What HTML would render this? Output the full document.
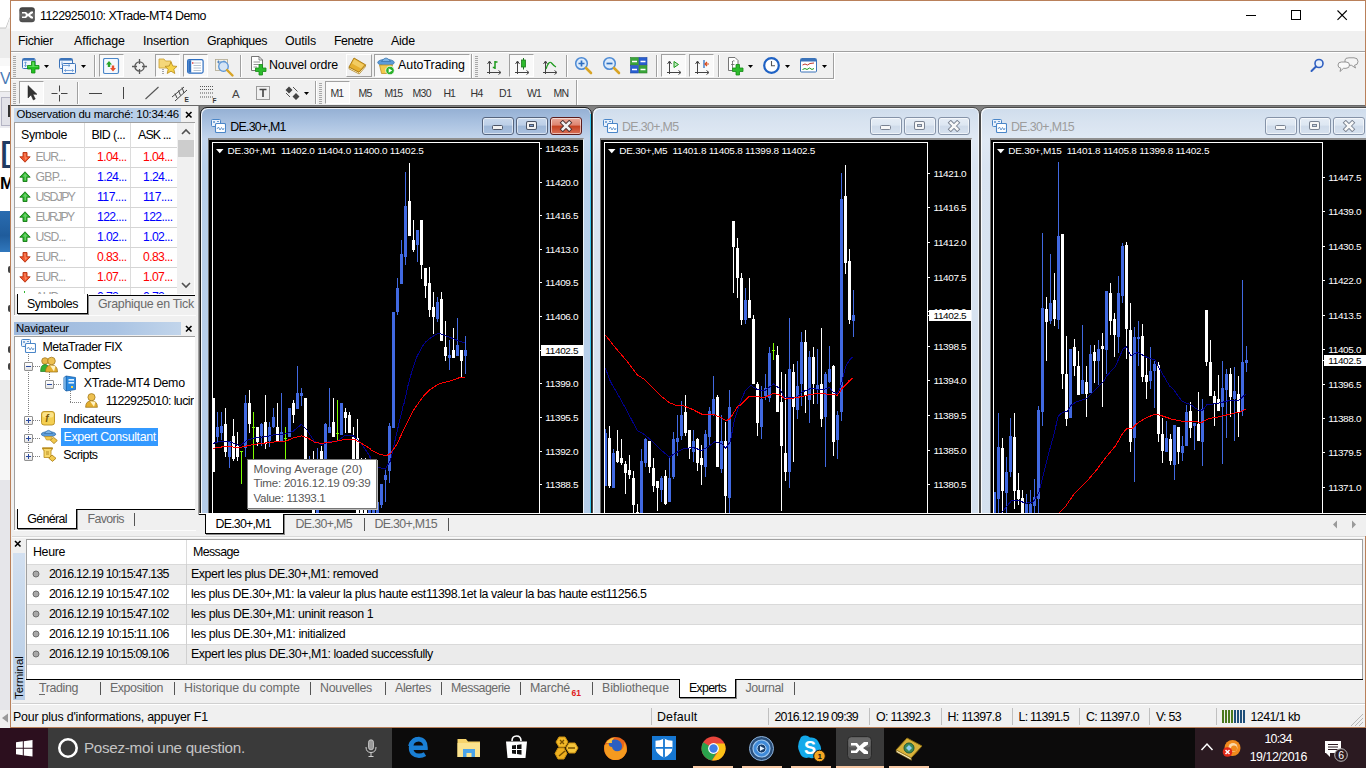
<!DOCTYPE html>
<html><head><meta charset="utf-8"><title>1122925010: XTrade-MT4 Demo</title>
<style>
html,body{margin:0;padding:0}
body{width:1366px;height:768px;position:relative;overflow:hidden;background:#f0f0f0;font-family:"Liberation Sans",sans-serif;font-size:12px}
.t{position:absolute;white-space:pre;display:block}
.r{position:absolute;display:block}
svg text{font-family:"Liberation Sans",sans-serif}
</style></head><body>

<!-- p1_frame -->
<div class="r" style="left:0px;top:0px;width:10px;height:728px;background:#ffffff;"></div>
<div class="r" style="left:0px;top:28px;width:10px;height:30px;background:#ececec;"></div>
<svg class="r" style="left:0px;top:14px;" width="10" height="15"><path d="M10 3.5 L6 14 H0" stroke="#c4c4c4" stroke-width="1" fill="none"/><path d="M10 4 L6.3 14.5 H10 Z" fill="#f4f4f4"/></svg>
<div class="r" style="left:0px;top:58px;width:10px;height:8px;background:#f8f8f8;"></div>
<span class="t" style="left:0.00px;top:71.46px;font-size:16px;line-height:16px;color:#4a7ab5;">V</span>
<div class="r" style="left:0px;top:91px;width:10px;height:1px;background:#d0d0d0;"></div>
<div class="r" style="left:0px;top:92px;width:10px;height:36px;background:#ececf0;"></div>
<div class="r" style="left:1px;top:97px;width:9px;height:29px;background:#e2e2e8;border:1px solid #b4b4c4;border-right:none;box-sizing:border-box;"></div>
<div class="r" style="left:8px;top:105px;width:2px;height:12px;background:#333;"></div>
<span class="t" style="left:-1.00px;top:135.49px;font-size:39px;line-height:40px;color:#1f3b63;">D</span>
<span class="t" style="left:0.00px;top:174.11px;font-size:17px;line-height:20px;color:#000;font-weight:bold;">M</span>
<div class="r" style="left:0px;top:211px;width:10px;height:41px;background:linear-gradient(#2a6cb0,#1f5c9c 60%,#3178bd);"></div>
<div class="r" style="left:8px;top:266px;width:2px;height:7px;background:#444;border-radius:2px 0 0 2px;"></div>
<div class="r" style="left:8px;top:305px;width:2px;height:7px;background:#444;border-radius:2px 0 0 2px;"></div>
<div class="r" style="left:8px;top:346px;width:2px;height:7px;background:#444;border-radius:2px 0 0 2px;"></div>
<div class="r" style="left:8px;top:363px;width:2px;height:7px;background:#444;border-radius:2px 0 0 2px;"></div>
<div class="r" style="left:0px;top:380px;width:10px;height:50px;background:#ececec;"></div>
<div class="r" style="left:0px;top:430px;width:10px;height:50px;background:#f6f6f6;"></div>
<div class="r" style="left:0px;top:480px;width:10px;height:230px;background:#e6e6ea;"></div>
<div class="r" style="left:0px;top:710px;width:10px;height:18px;background:#f0f0f0;"></div>
<svg class="r" style="left:1px;top:713px;" width="8" height="10"><path d="M7 0.5 L1 5 L7 9.5 Z" fill="#9a9a9a"/></svg>
<div class="r" style="left:10px;top:0px;width:1356px;height:728px;background:#f0f0f0;border:1px solid #b9805a;box-sizing:border-box;"></div>
<div class="r" style="left:11px;top:1px;width:1354px;height:30px;background:#ffffff;"></div>
<svg class="r" style="left:19px;top:7px;" width="17" height="16"><defs><linearGradient id="tg" x1="0" y1="0" x2="0" y2="1"><stop offset="0" stop-color="#3c3c3c"/><stop offset="0.5" stop-color="#6a6a6a"/><stop offset="1" stop-color="#4a4a4a"/></linearGradient></defs><rect x="0.3" y="0.3" width="15.6" height="15" rx="3" fill="url(#tg)"/><path d="M3 5 L7 5 L9 7 L12 4.5 L14 4.5 L14 6 L11 8 L14 10 L14 11.5 L12 11.5 L9 9 L7 11 L3 11 L3 9.5 L6 9.5 L7 8 L6 6.5 L3 6.5 Z" fill="#fff"/></svg>
<span class="t" style="left:40.00px;top:8.20px;font-size:12.4px;line-height:16px;color:#000;letter-spacing:-0.540px;">1122925010: XTrade-MT4 Demo</span>
<div class="r" style="left:1246px;top:15px;width:10px;height:1px;background:#000;"></div>
<div class="r" style="left:1291px;top:10px;width:10px;height:10px;background:transparent;border:1px solid #000;box-sizing:border-box;"></div>
<svg class="r" style="left:1336px;top:9px;" width="13" height="13"><path d="M1.5 1.5 L10.8 10.8 M10.8 1.5 L1.5 10.8" stroke="#000" stroke-width="1.1" fill="none"/></svg>
<span class="t" style="left:18.00px;top:32.70px;font-size:12.4px;line-height:16px;color:#000;letter-spacing:-0.315px;">Fichier</span>
<span class="t" style="left:74.00px;top:32.70px;font-size:12.4px;line-height:16px;color:#000;letter-spacing:-0.053px;">Affichage</span>
<span class="t" style="left:143.00px;top:32.70px;font-size:12.4px;line-height:16px;color:#000;letter-spacing:-0.173px;">Insertion</span>
<span class="t" style="left:207.00px;top:32.70px;font-size:12.4px;line-height:16px;color:#000;letter-spacing:-0.411px;">Graphiques</span>
<span class="t" style="left:285.00px;top:32.70px;font-size:12.4px;line-height:16px;color:#000;letter-spacing:-0.116px;">Outils</span>
<span class="t" style="left:334.00px;top:32.70px;font-size:12.4px;line-height:16px;color:#000;letter-spacing:-0.534px;">Fenetre</span>
<span class="t" style="left:391.00px;top:32.70px;font-size:12.4px;line-height:16px;color:#000;letter-spacing:-0.205px;">Aide</span>
<div class="r" style="left:11px;top:51px;width:1354px;height:1px;background:#a0a0a0;"></div>
<div class="r" style="left:11px;top:52px;width:1354px;height:1px;background:#ffffff;"></div>
<div class="r" style="left:11px;top:78px;width:823px;height:1px;background:#a0a0a0;"></div>
<div class="r" style="left:11px;top:79px;width:824px;height:1px;background:#ffffff;"></div>
<div class="r" style="left:833px;top:53px;width:1px;height:26px;background:#a0a0a0;"></div>
<div class="r" style="left:834px;top:53px;width:1px;height:27px;background:#ffffff;"></div>
<div class="r" style="left:576px;top:80px;width:1px;height:25px;background:#a0a0a0;"></div>
<div class="r" style="left:577px;top:80px;width:1px;height:25px;background:#ffffff;"></div>
<div class="r" style="left:11px;top:105px;width:1354px;height:1px;background:#696969;"></div>
<!-- p2_toolbar -->
<div class="r" style="left:13px;top:56px;width:3px;height:1px;background:#a8a8a8;"></div><div class="r" style="left:13px;top:58px;width:3px;height:1px;background:#a8a8a8;"></div><div class="r" style="left:13px;top:60px;width:3px;height:1px;background:#a8a8a8;"></div><div class="r" style="left:13px;top:62px;width:3px;height:1px;background:#a8a8a8;"></div><div class="r" style="left:13px;top:64px;width:3px;height:1px;background:#a8a8a8;"></div><div class="r" style="left:13px;top:66px;width:3px;height:1px;background:#a8a8a8;"></div><div class="r" style="left:13px;top:68px;width:3px;height:1px;background:#a8a8a8;"></div><div class="r" style="left:13px;top:70px;width:3px;height:1px;background:#a8a8a8;"></div><div class="r" style="left:13px;top:72px;width:3px;height:1px;background:#a8a8a8;"></div><div class="r" style="left:13px;top:74px;width:3px;height:1px;background:#a8a8a8;"></div><div class="r" style="left:13px;top:76px;width:3px;height:1px;background:#a8a8a8;"></div>
<svg class="r" style="left:22px;top:57px;" width="18" height="17"><rect x="0.5" y="1.5" width="12.5" height="10" rx="1" fill="#f3f7fd" stroke="#3b73b9"/><rect x="1" y="2" width="11.5" height="1.6" fill="#3b73b9"/><path d="M3.5 5 V9.5 M2.3 6.2 L3.5 4.8 L4.7 6.2 M2.3 8.3 L3.5 9.7 L4.7 8.3" stroke="#5b8fd0" stroke-width="0.8" fill="none"/><path d="M9.5 4.5 H13 V8.5 H17 V12 H13 V16 H9.5 V12 H5.5 V8.5 H9.5 Z" fill="#22c022" stroke="#0f8a0f" stroke-width="0.8"/><path d="M10.3 5.3 H12.2 V9.3 H16.2 V10 H6.3 V9.3 H10.3 Z" fill="#7be87b" opacity="0.7"/></svg>
<svg class="r" style="left:44px;top:65px;" width="5" height="3"><path d="M0 0 L5 0 L2.5 3 Z" fill="#000"/></svg>
<svg class="r" style="left:59px;top:57px;" width="18" height="18"><rect x="0.5" y="1.5" width="13" height="10" rx="1" fill="#f3f7fd" stroke="#3b73b9"/><rect x="1" y="2" width="12" height="1.6" fill="#3b73b9"/><rect x="3.5" y="6.5" width="13" height="10" rx="1" fill="#f3f7fd" stroke="#3b73b9"/><path d="M3 4.5 V8 M3 8.5 H11 M9.5 7.3 L11 8.5 L9.5 9.7" stroke="#5b8fd0" stroke-width="0.8" fill="none"/><path d="M5.5 13.5 H14.5 M7 12.3 L5.5 13.5 L7 14.7 M13 12.3 L14.5 13.5 L13 14.7" stroke="#5b8fd0" stroke-width="0.8" fill="none"/></svg>
<svg class="r" style="left:81px;top:65px;" width="5" height="3"><path d="M0 0 L5 0 L2.5 3 Z" fill="#000"/></svg>
<div class="r" style="left:94px;top:55px;width:1px;height:22px;background:#a0a0a0;"></div><div class="r" style="left:95px;top:55px;width:1px;height:22px;background:#ffffff;"></div>
<div class="r" style="left:99px;top:54px;width:25px;height:23px;background:#f9f9f9;box-sizing:border-box;border:1px solid;border-color:#a0a0a0 #ffffff #ffffff #a0a0a0;"></div>
<svg class="r" style="left:103px;top:58px;" width="17" height="17"><rect x="0.5" y="0.5" width="15" height="15" rx="1.5" fill="#f4f8fd" stroke="#4a86c8" stroke-width="1.2"/><path d="M6 3 L9 6.5 H7.2 V9 H4.8 V6.5 H3 Z" fill="#2aa52a"/><path d="M10 13.5 L7 10 H8.8 V7.5 H11.2 V10 H13 Z" fill="#e8502a"/></svg>
<svg class="r" style="left:132px;top:59px;" width="15" height="15"><circle cx="7.5" cy="7.5" r="4.6" fill="none" stroke="#5a5a5a" stroke-width="1.3"/><path d="M7.5 0 V5 M7.5 10 V15 M0 7.5 H5 M10 7.5 H15" stroke="#5a5a5a" stroke-width="1.3"/></svg>
<div class="r" style="left:155px;top:54px;width:25px;height:23px;background:#f9f9f9;box-sizing:border-box;border:1px solid;border-color:#a0a0a0 #ffffff #ffffff #a0a0a0;"></div>
<svg class="r" style="left:158px;top:56px;" width="20" height="19"><path d="M1 3 H6 L7.5 5 H13 V12 H1 Z" fill="#f5d77a" stroke="#c9a030" stroke-width="0.8"/><path d="M13 6 L14.8 10 L19 10.4 L15.8 13.2 L16.8 17.5 L13 15.2 L9.2 17.5 L10.2 13.2 L7 10.4 L11.2 10 Z" fill="#f7d44a" stroke="#b88a1a" stroke-width="0.8"/><path d="M5 13 V18" stroke="#555" stroke-width="1" stroke-dasharray="1,1"/></svg>
<div class="r" style="left:183px;top:54px;width:25px;height:23px;background:#f9f9f9;box-sizing:border-box;border:1px solid;border-color:#a0a0a0 #ffffff #ffffff #a0a0a0;"></div>
<svg class="r" style="left:187px;top:58.5px;" width="17" height="15"><rect x="0.6" y="0.6" width="15.5" height="13.5" rx="1.5" fill="#fff" stroke="#2f6fc0" stroke-width="1.2"/><rect x="1.2" y="1.2" width="3" height="12.4" fill="#2f6fc0"/><path d="M6.5 4 H14 M6.5 6.5 H14 M6.5 9 H14 M6.5 11.5 H14" stroke="#9ab" stroke-width="0.7"/><rect x="5" y="3.3" width="1.4" height="1.4" fill="#d33"/></svg>
<svg class="r" style="left:215px;top:58px;" width="20" height="20"><rect x="0.5" y="1.5" width="12" height="11" fill="#f3f0e6" stroke="#b0a890" stroke-width="0.8"/><path d="M2 4 H11 M3.5 2.5 V5.5 M9 2.5 V5.5" stroke="#3b73b9" stroke-width="0.8"/><circle cx="8.5" cy="8.5" r="4.8" fill="#cfe2f7" fill-opacity="0.85" stroke="#5b95d6" stroke-width="1.3"/><path d="M12 12 L17.5 17.5" stroke="#d8a426" stroke-width="2.4" stroke-linecap="round"/></svg>
<div class="r" style="left:240px;top:55px;width:1px;height:22px;background:#a0a0a0;"></div><div class="r" style="left:241px;top:55px;width:1px;height:22px;background:#ffffff;"></div>
<svg class="r" style="left:250px;top:56px;" width="18" height="20"><path d="M1.5 0.5 H9 L12.5 4 V14.5 H1.5 Z" fill="#fff" stroke="#666" stroke-width="0.9"/><path d="M9 0.5 V4 H12.5" fill="none" stroke="#666" stroke-width="0.8"/><path d="M3.5 6 H10 M3.5 8.5 H10 M3.5 11 H7" stroke="#888" stroke-width="0.9"/><path d="M9 8.5 H12.5 V12 H16 V15.5 H12.5 V19 H9 V15.5 H5.5 V12 H9 Z" fill="#2dbb2d" stroke="#148a14" stroke-width="0.8"/></svg>
<span class="t" style="left:269.00px;top:56.70px;font-size:12.4px;line-height:16px;color:#000;letter-spacing:-0.166px;">Nouvel ordre</span>
<div class="r" style="left:346px;top:54px;width:26px;height:23px;background:#f0f0f0;box-sizing:border-box;border:1px solid;border-color:#ffffff #a0a0a0 #a0a0a0 #ffffff;"></div>
<svg class="r" style="left:348px;top:57px;" width="20" height="18"><path d="M1 10 L11 15.2 L17.5 7.8 L17.5 9.6 L11.2 17 L1 11.8 Z" fill="#fff3c8" stroke="#a87812" stroke-width="0.7"/><path d="M6 1 L17.5 7.8 L11 15.2 L1 10 Z" fill="#e6b030" stroke="#a87812" stroke-width="0.9"/><path d="M6.2 2.2 L16 8 L13 11.5 L4 6.5 Z" fill="#f6d878" opacity="0.7"/></svg>
<div class="r" style="left:374px;top:54px;width:96px;height:23px;background:#f9f9f9;box-sizing:border-box;border:1px solid;border-color:#a0a0a0 #ffffff #ffffff #a0a0a0;"></div>
<svg class="r" style="left:377px;top:56px;" width="19" height="20"><ellipse cx="9" cy="6.5" rx="8.3" ry="3.2" fill="#5b9bd8" stroke="#356fa8" stroke-width="0.7"/><path d="M4.5 5.5 Q9 -1.5 13.5 5.5 Z" fill="#7db4e6" stroke="#356fa8" stroke-width="0.7"/><path d="M2.5 9 H15.5 L13.5 17.5 H4.5 Z" fill="#f2c94c" stroke="#b88a1a" stroke-width="0.7"/><circle cx="13" cy="14.5" r="4.3" fill="#2bb12b" stroke="#fff" stroke-width="0.8"/><path d="M11.7 12.3 L15.2 14.5 L11.7 16.7 Z" fill="#fff"/></svg>
<span class="t" style="left:398.00px;top:56.70px;font-size:12.4px;line-height:16px;color:#000;letter-spacing:-0.009px;">AutoTrading</span>
<div class="r" style="left:471px;top:54px;width:1px;height:24px;background:#a0a0a0;"></div><div class="r" style="left:472px;top:54px;width:1px;height:24px;background:#ffffff;"></div>
<div class="r" style="left:475px;top:56px;width:3px;height:1px;background:#a8a8a8;"></div><div class="r" style="left:475px;top:58px;width:3px;height:1px;background:#a8a8a8;"></div><div class="r" style="left:475px;top:60px;width:3px;height:1px;background:#a8a8a8;"></div><div class="r" style="left:475px;top:62px;width:3px;height:1px;background:#a8a8a8;"></div><div class="r" style="left:475px;top:64px;width:3px;height:1px;background:#a8a8a8;"></div><div class="r" style="left:475px;top:66px;width:3px;height:1px;background:#a8a8a8;"></div><div class="r" style="left:475px;top:68px;width:3px;height:1px;background:#a8a8a8;"></div><div class="r" style="left:475px;top:70px;width:3px;height:1px;background:#a8a8a8;"></div><div class="r" style="left:475px;top:72px;width:3px;height:1px;background:#a8a8a8;"></div><div class="r" style="left:475px;top:74px;width:3px;height:1px;background:#a8a8a8;"></div><div class="r" style="left:475px;top:76px;width:3px;height:1px;background:#a8a8a8;"></div>
<svg class="r" style="left:486px;top:60px;" width="18" height="17"><path d="M3.5 1.5 V14 M1 12.5 H14.5" stroke="#444" stroke-width="1" fill="none"/><path d="M1.5 4 L3.5 1 L5.5 4 M12.5 10.5 L15 12.5 L12.5 14.5" stroke="#444" stroke-width="1" fill="none"/><path d="M9 1 V9 M9 2 H11.5 M6.8 7.5 H9" stroke="#1d9a1d" stroke-width="1.5" fill="none"/></svg>
<div class="r" style="left:509px;top:54px;width:25px;height:23px;background:#f9f9f9;box-sizing:border-box;border:1px solid;border-color:#a0a0a0 #ffffff #ffffff #a0a0a0;"></div>
<svg class="r" style="left:514px;top:60px;overflow:visible;" width="18" height="17"><path d="M3.5 1.5 V14 M1 12.5 H14.5" stroke="#444" stroke-width="1" fill="none"/><path d="M1.5 4 L3.5 1 L5.5 4 M12.5 10.5 L15 12.5 L12.5 14.5" stroke="#444" stroke-width="1" fill="none"/><path d="M9.5 -2 V9.5" stroke="#1d7a1d" stroke-width="1"/><rect x="7.5" y="0" width="4" height="7" fill="#2dbb2d" stroke="#1d7a1d" stroke-width="0.8"/></svg>
<svg class="r" style="left:542px;top:60px;" width="18" height="17"><path d="M3.5 1.5 V14 M1 12.5 H14.5" stroke="#444" stroke-width="1" fill="none"/><path d="M1.5 4 L3.5 1 L5.5 4 M12.5 10.5 L15 12.5 L12.5 14.5" stroke="#444" stroke-width="1" fill="none"/><path d="M4 9 Q7 0 9.5 3 T14 7" stroke="#1d9a1d" stroke-width="1.2" fill="none"/></svg>
<div class="r" style="left:566px;top:55px;width:1px;height:22px;background:#a0a0a0;"></div><div class="r" style="left:567px;top:55px;width:1px;height:22px;background:#ffffff;"></div>
<svg class="r" style="left:574px;top:56px;" width="20" height="20"><circle cx="7.5" cy="7.5" r="5.8" fill="#dcebfb" stroke="#4d8ad4" stroke-width="1.5"/><path d="M4.5 7.5 H10.5 M7.5 4.5 V10.5" stroke="#2f6fc0" stroke-width="1.7"/><path d="M12 12 L17 17" stroke="#d8a426" stroke-width="2.6" stroke-linecap="round"/></svg>
<svg class="r" style="left:602px;top:56px;" width="20" height="20"><circle cx="7.5" cy="7.5" r="5.8" fill="#dcebfb" stroke="#4d8ad4" stroke-width="1.5"/><path d="M4.5 7.5 H10.5" stroke="#2f6fc0" stroke-width="1.7"/><path d="M12 12 L17 17" stroke="#d8a426" stroke-width="2.6" stroke-linecap="round"/></svg>
<svg class="r" style="left:630px;top:57px;" width="18" height="17"><rect x="0.5" y="0.5" width="8" height="7.5" fill="#3aa53a" stroke="#2b7d2b" stroke-width="0.6"/><rect x="9" y="0.5" width="8" height="7.5" fill="#2a5fd0" stroke="#1d46a0" stroke-width="0.6"/><rect x="0.5" y="8.5" width="8" height="7.5" fill="#2a5fd0" stroke="#1d46a0" stroke-width="0.6"/><rect x="9" y="8.5" width="8" height="7.5" fill="#3aa53a" stroke="#2b7d2b" stroke-width="0.6"/><path d="M2 4.5 H7 M10.5 4.5 H15.5 M2 12.5 H7 M10.5 12.5 H15.5" stroke="#fff" stroke-width="1.6"/></svg>
<div class="r" style="left:656px;top:55px;width:1px;height:22px;background:#a0a0a0;"></div><div class="r" style="left:657px;top:55px;width:1px;height:22px;background:#ffffff;"></div>
<div class="r" style="left:661px;top:54px;width:25px;height:23px;background:#f9f9f9;box-sizing:border-box;border:1px solid;border-color:#a0a0a0 #ffffff #ffffff #a0a0a0;"></div>
<svg class="r" style="left:666px;top:60px;" width="18" height="17"><path d="M3.5 1.5 V14 M1 12.5 H14.5" stroke="#444" stroke-width="1" fill="none"/><path d="M1.5 4 L3.5 1 L5.5 4 M12.5 10.5 L15 12.5 L12.5 14.5" stroke="#444" stroke-width="1" fill="none"/><path d="M8 1.5 L12.5 4.5 L8 7.5 Z" fill="#bfe8bf" stroke="#1d9a1d" stroke-width="1"/></svg>
<div class="r" style="left:689px;top:54px;width:25px;height:23px;background:#f9f9f9;box-sizing:border-box;border:1px solid;border-color:#a0a0a0 #ffffff #ffffff #a0a0a0;"></div>
<svg class="r" style="left:694px;top:60px;" width="18" height="17"><path d="M3.5 1.5 V14 M1 12.5 H14.5" stroke="#444" stroke-width="1" fill="none"/><path d="M1.5 4 L3.5 1 L5.5 4 M12.5 10.5 L15 12.5 L12.5 14.5" stroke="#444" stroke-width="1" fill="none"/><path d="M10 0 V8" stroke="#2f6fc0" stroke-width="1.3"/><path d="M15 4 H11 M13 2 L11 4 L13 6" stroke="#d84a1a" stroke-width="1.2" fill="none"/></svg>
<div class="r" style="left:718px;top:55px;width:1px;height:22px;background:#a0a0a0;"></div><div class="r" style="left:719px;top:55px;width:1px;height:22px;background:#ffffff;"></div>
<svg class="r" style="left:727px;top:57px;" width="18" height="19"><path d="M1.5 0.5 H8 L11 3.5 V13.5 H1.5 Z" fill="#fff" stroke="#666" stroke-width="0.9"/><path d="M5 5 Q6 3 7.5 4 M5.5 4 V11 M4 7.5 H7.5" stroke="#666" stroke-width="0.8" fill="none"/><path d="M9 7.5 H12.5 V11 H16 V14.5 H12.5 V18 H9 V14.5 H5.5 V11 H9 Z" fill="#2dbb2d" stroke="#148a14" stroke-width="0.8"/></svg>
<svg class="r" style="left:748px;top:65px;" width="5" height="3"><path d="M0 0 L5 0 L2.5 3 Z" fill="#000"/></svg>
<svg class="r" style="left:763px;top:57px;" width="18" height="18"><circle cx="8.5" cy="8.5" r="7.3" fill="#fff" stroke="#1f62c4" stroke-width="2.2"/><path d="M8.5 4 V8.8 H12" stroke="#555" stroke-width="1.1" fill="none"/></svg>
<svg class="r" style="left:785px;top:65px;" width="5" height="3"><path d="M0 0 L5 0 L2.5 3 Z" fill="#000"/></svg>
<svg class="r" style="left:800px;top:58px;" width="18" height="15"><rect x="0.5" y="0.5" width="16" height="13.5" rx="1" fill="#fff" stroke="#3b73b9" stroke-width="1"/><rect x="1" y="1" width="15" height="2.5" fill="#3b73b9"/><path d="M2.5 7 L5 6 L7.5 7 L10 5.5 L14 5" stroke="#c0392b" stroke-width="1" fill="none"/><path d="M2.5 11.5 L5 10.5 L7 11.5 L9.5 10 L12 11.5 L14 10.5" stroke="#1d9a1d" stroke-width="1" fill="none"/></svg>
<svg class="r" style="left:822px;top:65px;" width="5" height="3"><path d="M0 0 L5 0 L2.5 3 Z" fill="#000"/></svg>
<svg class="r" style="left:1310px;top:58px;" width="15" height="15"><circle cx="9" cy="5.5" r="4" fill="#e8f0fb" stroke="#2f5fc0" stroke-width="1.6"/><path d="M6 8.5 L1.5 13" stroke="#2f5fc0" stroke-width="2" stroke-linecap="round"/></svg>
<svg class="r" style="left:1337px;top:57px;" width="22" height="18"><path d="M8 3 Q8 0.8 12 0.8 H17 Q21 0.8 21 4.5 Q21 8 17.5 8.3 L18.5 11 L14.5 8.3 H12 Q8 8.3 8 5 Z" fill="#f4f4f4" stroke="#8a8a8a" stroke-width="0.9"/><path d="M1 8 Q1 5 4.5 5 H9 Q12.5 5 12.5 8 Q12.5 11.3 9 11.3 H6.5 L3 14.5 L3.8 11.2 Q1 10.8 1 8 Z" fill="#fafafa" stroke="#8a8a8a" stroke-width="0.9"/></svg>
<div class="r" style="left:13px;top:83px;width:3px;height:1px;background:#a8a8a8;"></div><div class="r" style="left:13px;top:85px;width:3px;height:1px;background:#a8a8a8;"></div><div class="r" style="left:13px;top:87px;width:3px;height:1px;background:#a8a8a8;"></div><div class="r" style="left:13px;top:89px;width:3px;height:1px;background:#a8a8a8;"></div><div class="r" style="left:13px;top:91px;width:3px;height:1px;background:#a8a8a8;"></div><div class="r" style="left:13px;top:93px;width:3px;height:1px;background:#a8a8a8;"></div><div class="r" style="left:13px;top:95px;width:3px;height:1px;background:#a8a8a8;"></div><div class="r" style="left:13px;top:97px;width:3px;height:1px;background:#a8a8a8;"></div><div class="r" style="left:13px;top:99px;width:3px;height:1px;background:#a8a8a8;"></div><div class="r" style="left:13px;top:101px;width:3px;height:1px;background:#a8a8a8;"></div><div class="r" style="left:13px;top:103px;width:3px;height:1px;background:#a8a8a8;"></div>
<div class="r" style="left:19px;top:81px;width:25px;height:23px;background:#f9f9f9;box-sizing:border-box;border:1px solid;border-color:#a0a0a0 #ffffff #ffffff #a0a0a0;"></div>
<svg class="r" style="left:26.5px;top:85px;" width="12" height="16"><path d="M1 0.5 V13 L4 10 L6.3 15 L8.3 14 L6 9.3 H10 Z" fill="#333" stroke="#222" stroke-width="0.5"/></svg>
<svg class="r" style="left:51px;top:85px;" width="18" height="18"><path d="M8.5 0.5 V6.5 M8.5 10 V16.5 M0.5 8.5 H6.5 M10 8.5 H16.5" stroke="#444" stroke-width="1"/></svg>
<div class="r" style="left:77px;top:82px;width:1px;height:22px;background:#a0a0a0;"></div><div class="r" style="left:78px;top:82px;width:1px;height:22px;background:#ffffff;"></div>
<div class="r" style="left:89px;top:93px;width:13px;height:1px;background:#444;"></div>
<div class="r" style="left:123px;top:87px;width:1px;height:12px;background:#444;"></div>
<svg class="r" style="left:144px;top:86px;" width="16" height="14"><path d="M1.5 13 L14.5 1" stroke="#555" stroke-width="1.1"/></svg>
<svg class="r" style="left:171px;top:84px;" width="20" height="18"><path d="M1 13 L13 3 M4 17 L16 6 M4 9.5 L6 14 M7.5 6.5 L9.5 11.5 M11 3.5 L13 9" stroke="#444" stroke-width="1" fill="none"/><text x="13.5" y="17.5" font-size="6.5" font-weight="bold" fill="#333">E</text></svg>
<svg class="r" style="left:199px;top:85px;" width="22" height="18"><path d="M1 1.5 H14 M1 4.5 H14 M1 8 H14 M1 12 H14" stroke="#555" stroke-width="1" stroke-dasharray="1,1"/><text x="13.5" y="17.5" font-size="6.5" font-weight="bold" fill="#333">F</text></svg>
<span class="t" style="left:232.00px;top:86.02px;font-size:11.5px;line-height:16px;color:#444;">A</span>
<svg class="r" style="left:255px;top:84px;" width="17" height="18"><rect x="1.5" y="2.5" width="13" height="13" fill="none" stroke="#444" stroke-width="1" stroke-dasharray="1,1"/><path d="M4.5 5.5 H11.5 M8 5.5 V13" stroke="#444" stroke-width="1.6"/></svg>
<svg class="r" style="left:284px;top:86px;" width="18" height="15"><path d="M5 0.5 L8.5 4 L5 7.5 L1.5 4 Z M12 7 L15.5 10.5 L12 14 L8.5 10.5 Z" fill="#444"/><path d="M2 7 L6 11 M9 1 L13.5 5.5" stroke="#444" stroke-width="0.9"/></svg>
<svg class="r" style="left:304px;top:92px;" width="5" height="3"><path d="M0 0 L5 0 L2.5 3 Z" fill="#000"/></svg>
<div class="r" style="left:315px;top:81px;width:1px;height:23px;background:#a0a0a0;"></div><div class="r" style="left:316px;top:81px;width:1px;height:23px;background:#ffffff;"></div>
<div class="r" style="left:319px;top:83px;width:3px;height:1px;background:#a8a8a8;"></div><div class="r" style="left:319px;top:85px;width:3px;height:1px;background:#a8a8a8;"></div><div class="r" style="left:319px;top:87px;width:3px;height:1px;background:#a8a8a8;"></div><div class="r" style="left:319px;top:89px;width:3px;height:1px;background:#a8a8a8;"></div><div class="r" style="left:319px;top:91px;width:3px;height:1px;background:#a8a8a8;"></div><div class="r" style="left:319px;top:93px;width:3px;height:1px;background:#a8a8a8;"></div><div class="r" style="left:319px;top:95px;width:3px;height:1px;background:#a8a8a8;"></div><div class="r" style="left:319px;top:97px;width:3px;height:1px;background:#a8a8a8;"></div><div class="r" style="left:319px;top:99px;width:3px;height:1px;background:#a8a8a8;"></div><div class="r" style="left:319px;top:101px;width:3px;height:1px;background:#a8a8a8;"></div><div class="r" style="left:319px;top:103px;width:3px;height:1px;background:#a8a8a8;"></div>
<div class="r" style="left:325px;top:81px;width:25px;height:23px;background:#f9f9f9;box-sizing:border-box;border:1px solid;border-color:#a0a0a0 #ffffff #ffffff #a0a0a0;"></div>
<span class="t" style="left:330.50px;top:85.36px;font-size:10.5px;line-height:16px;color:#333;letter-spacing:-1.043px;">M1</span>
<span class="t" style="left:358.60px;top:85.36px;font-size:10.5px;line-height:16px;color:#333;letter-spacing:-0.843px;">M5</span>
<span class="t" style="left:384.50px;top:85.36px;font-size:10.5px;line-height:16px;color:#333;letter-spacing:-0.976px;">M15</span>
<span class="t" style="left:412.60px;top:85.36px;font-size:10.5px;line-height:16px;color:#333;letter-spacing:-0.776px;">M30</span>
<span class="t" style="left:443.50px;top:85.36px;font-size:10.5px;line-height:16px;color:#333;letter-spacing:-0.961px;">H1</span>
<span class="t" style="left:470.50px;top:85.36px;font-size:10.5px;line-height:16px;color:#333;letter-spacing:-0.461px;">H4</span>
<span class="t" style="left:499.00px;top:85.36px;font-size:10.5px;line-height:16px;color:#333;letter-spacing:-0.211px;">D1</span>
<span class="t" style="left:527.00px;top:85.36px;font-size:10.5px;line-height:16px;color:#333;letter-spacing:-0.875px;">W1</span>
<span class="t" style="left:553.50px;top:85.36px;font-size:10.5px;line-height:16px;color:#333;letter-spacing:-0.715px;">MN</span>
<!-- p3_panels -->
<div class="r" style="left:14px;top:108px;width:167px;height:14px;background:linear-gradient(90deg,#c7d8ec,#b4cbe6 60%,#c2d5eb);"></div>
<span class="t" style="left:16.50px;top:105.85px;font-size:11.4px;line-height:16px;color:#000;letter-spacing:-0.216px;">Observation du marché: 10:34:46</span>
<svg class="r" style="left:185px;top:111px;" width="8" height="8"><path d="M1 1 L6.5 6.5 M6.5 1 L1 6.5" stroke="#000" stroke-width="1.6" fill="none"/></svg>
<div class="r" style="left:14px;top:122px;width:181px;height:173px;background:#ffffff;border-left:1px solid #a0a0a0;border-top:1px solid #a0a0a0;box-sizing:border-box;"></div>
<div class="r" style="left:15px;top:147px;width:162px;height:1px;background:#d5d5d5;"></div>
<div class="r" style="left:84px;top:123px;width:1px;height:172px;background:#dcdcdc;"></div>
<div class="r" style="left:130px;top:123px;width:1px;height:172px;background:#dcdcdc;"></div>
<span class="t" style="left:21.00px;top:127.00px;font-size:12.4px;line-height:16px;color:#000;letter-spacing:-0.321px;">Symbole</span>
<span class="t" style="left:91.40px;top:127.00px;font-size:12.4px;line-height:16px;color:#000;letter-spacing:-0.623px;">BID (...</span>
<span class="t" style="left:138.00px;top:127.00px;font-size:12.4px;line-height:16px;color:#000;letter-spacing:-0.856px;">ASK ...</span>
<div class="r" style="left:15px;top:167px;width:162px;height:1px;background:#d5d5d5;"></div>
<svg class="r" style="left:19px;top:151px;" width="12" height="12"><path d="M6 11.2 L11.2 5.8 H8 V1.5 H4 V5.8 H0.8 Z" fill="#f0572d" stroke="#b5300f" stroke-width="0.9"/><path d="M5.2 2.5 H6.6 V6.5 H8.5 L6 9.3 Z" fill="#ffb08f" opacity="0.6"/></svg>
<span class="t" style="left:35.50px;top:149.17px;font-size:12.2px;line-height:16px;color:#9a9a9a;letter-spacing:-1.071px;">EUR...</span>
<span class="t" style="left:97.00px;top:149.17px;font-size:12.2px;line-height:16px;color:#ff0000;letter-spacing:-0.630px;">1.04...</span>
<span class="t" style="left:143.00px;top:149.17px;font-size:12.2px;line-height:16px;color:#ff0000;letter-spacing:-0.630px;">1.04...</span>
<div class="r" style="left:15px;top:187px;width:162px;height:1px;background:#d5d5d5;"></div>
<svg class="r" style="left:19px;top:171px;" width="12" height="12"><path d="M6 0.8 L11.2 6.2 H8 V10.5 H4 V6.2 H0.8 Z" fill="#2fb52f" stroke="#157a15" stroke-width="0.9"/><path d="M6 2.5 L8.8 5.5 H7 V9.3 H5.6 V5.5 H3.8 Z" fill="#8fe08f" opacity="0.6"/></svg>
<span class="t" style="left:35.50px;top:169.17px;font-size:12.2px;line-height:16px;color:#9a9a9a;letter-spacing:-0.643px;">GBP...</span>
<span class="t" style="left:97.00px;top:169.17px;font-size:12.2px;line-height:16px;color:#0000ff;letter-spacing:-0.630px;">1.24...</span>
<span class="t" style="left:143.00px;top:169.17px;font-size:12.2px;line-height:16px;color:#0000ff;letter-spacing:-0.630px;">1.24...</span>
<div class="r" style="left:15px;top:207px;width:162px;height:1px;background:#d5d5d5;"></div>
<svg class="r" style="left:19px;top:191px;" width="12" height="12"><path d="M6 0.8 L11.2 6.2 H8 V10.5 H4 V6.2 H0.8 Z" fill="#2fb52f" stroke="#157a15" stroke-width="0.9"/><path d="M6 2.5 L8.8 5.5 H7 V9.3 H5.6 V5.5 H3.8 Z" fill="#8fe08f" opacity="0.6"/></svg>
<span class="t" style="left:35.50px;top:189.17px;font-size:12.2px;line-height:16px;color:#9a9a9a;letter-spacing:-1.522px;">USDJPY</span>
<span class="t" style="left:97.00px;top:189.17px;font-size:12.2px;line-height:16px;color:#0000ff;letter-spacing:-0.501px;">117....</span>
<span class="t" style="left:143.00px;top:189.17px;font-size:12.2px;line-height:16px;color:#0000ff;letter-spacing:-0.501px;">117....</span>
<div class="r" style="left:15px;top:227px;width:162px;height:1px;background:#d5d5d5;"></div>
<svg class="r" style="left:19px;top:211px;" width="12" height="12"><path d="M6 0.8 L11.2 6.2 H8 V10.5 H4 V6.2 H0.8 Z" fill="#2fb52f" stroke="#157a15" stroke-width="0.9"/><path d="M6 2.5 L8.8 5.5 H7 V9.3 H5.6 V5.5 H3.8 Z" fill="#8fe08f" opacity="0.6"/></svg>
<span class="t" style="left:35.50px;top:209.17px;font-size:12.2px;line-height:16px;color:#9a9a9a;letter-spacing:-1.689px;">EURJPY</span>
<span class="t" style="left:97.00px;top:209.17px;font-size:12.2px;line-height:16px;color:#0000ff;letter-spacing:-0.630px;">122....</span>
<span class="t" style="left:143.00px;top:209.17px;font-size:12.2px;line-height:16px;color:#0000ff;letter-spacing:-0.630px;">122....</span>
<div class="r" style="left:15px;top:247px;width:162px;height:1px;background:#d5d5d5;"></div>
<svg class="r" style="left:19px;top:231px;" width="12" height="12"><path d="M6 0.8 L11.2 6.2 H8 V10.5 H4 V6.2 H0.8 Z" fill="#2fb52f" stroke="#157a15" stroke-width="0.9"/><path d="M6 2.5 L8.8 5.5 H7 V9.3 H5.6 V5.5 H3.8 Z" fill="#8fe08f" opacity="0.6"/></svg>
<span class="t" style="left:35.50px;top:229.17px;font-size:12.2px;line-height:16px;color:#9a9a9a;letter-spacing:-0.988px;">USD...</span>
<span class="t" style="left:97.00px;top:229.17px;font-size:12.2px;line-height:16px;color:#0000ff;letter-spacing:-0.630px;">1.02...</span>
<span class="t" style="left:143.00px;top:229.17px;font-size:12.2px;line-height:16px;color:#0000ff;letter-spacing:-0.630px;">1.02...</span>
<div class="r" style="left:15px;top:267px;width:162px;height:1px;background:#d5d5d5;"></div>
<svg class="r" style="left:19px;top:251px;" width="12" height="12"><path d="M6 11.2 L11.2 5.8 H8 V1.5 H4 V5.8 H0.8 Z" fill="#f0572d" stroke="#b5300f" stroke-width="0.9"/><path d="M5.2 2.5 H6.6 V6.5 H8.5 L6 9.3 Z" fill="#ffb08f" opacity="0.6"/></svg>
<span class="t" style="left:35.50px;top:249.17px;font-size:12.2px;line-height:16px;color:#9a9a9a;letter-spacing:-1.071px;">EUR...</span>
<span class="t" style="left:97.00px;top:249.17px;font-size:12.2px;line-height:16px;color:#ff0000;letter-spacing:-0.630px;">0.83...</span>
<span class="t" style="left:143.00px;top:249.17px;font-size:12.2px;line-height:16px;color:#ff0000;letter-spacing:-0.630px;">0.83...</span>
<div class="r" style="left:15px;top:287px;width:162px;height:1px;background:#d5d5d5;"></div>
<svg class="r" style="left:19px;top:271px;" width="12" height="12"><path d="M6 11.2 L11.2 5.8 H8 V1.5 H4 V5.8 H0.8 Z" fill="#f0572d" stroke="#b5300f" stroke-width="0.9"/><path d="M5.2 2.5 H6.6 V6.5 H8.5 L6 9.3 Z" fill="#ffb08f" opacity="0.6"/></svg>
<span class="t" style="left:35.50px;top:269.17px;font-size:12.2px;line-height:16px;color:#9a9a9a;letter-spacing:-1.071px;">EUR...</span>
<span class="t" style="left:97.00px;top:269.17px;font-size:12.2px;line-height:16px;color:#ff0000;letter-spacing:-0.630px;">1.07...</span>
<span class="t" style="left:143.00px;top:269.17px;font-size:12.2px;line-height:16px;color:#ff0000;letter-spacing:-0.630px;">1.07...</span>
<div class="r" style="left:15px;top:288px;width:162px;height:6px;overflow:hidden"><div class="r" style="left:9px;top:3px;width:1px;height:2px;background:#2fb52f"></div><span class="t" style="left:20.50px;top:1.37px;font-size:12.2px;line-height:16px;color:#9a9a9a;letter-spacing:-0.988px;">AUD...</span><span class="t" style="left:82.00px;top:1.37px;font-size:12.2px;line-height:16px;color:#0000ff;letter-spacing:-0.630px;">0.72...</span><span class="t" style="left:128.00px;top:1.37px;font-size:12.2px;line-height:16px;color:#0000ff;letter-spacing:-0.630px;">0.72...</span></div>
<div class="r" style="left:177px;top:123px;width:17px;height:171px;background:#f0f0f0;"></div>
<div class="r" style="left:178px;top:140px;width:16px;height:17px;background:#cdcdcd;"></div>
<svg class="r" style="left:181px;top:128px;" width="10" height="8"><path d="M1 6 L5 2 L9 6" stroke="#505050" stroke-width="1.6" fill="none"/></svg>
<svg class="r" style="left:181px;top:281px;" width="10" height="8"><path d="M1 2 L5 6 L9 2" stroke="#505050" stroke-width="1.6" fill="none"/></svg>
<div class="r" style="left:88px;top:295px;width:107px;height:1px;background:#000;"></div>
<div class="r" style="left:17px;top:294px;width:71px;height:20px;background:#ffffff;border:1px solid #000;border-top:none;box-sizing:border-box;box-shadow:1px 1px 0 #888;"></div>
<span class="t" style="left:27.00px;top:296.10px;font-size:12.4px;line-height:16px;color:#000;letter-spacing:-0.431px;">Symboles</span>
<div class="r" style="left:88px;top:296px;width:107px;height:20px;overflow:hidden"><span class="t" style="left:10.00px;top:0.10px;font-size:12.4px;line-height:16px;color:#6a6a6a;letter-spacing:-0.273px;">Graphique en Tick</span></div>
<div class="r" style="left:14px;top:295px;width:1px;height:21px;background:#a0a0a0;"></div>
<div class="r" style="left:14px;top:315px;width:182px;height:1px;background:#fcfcfc;"></div>
<div class="r" style="left:14px;top:322px;width:167px;height:13px;background:linear-gradient(90deg,#9db8dc,#a9c3e3 60%,#c2d5eb);"></div>
<span class="t" style="left:16.00px;top:319.55px;font-size:11.4px;line-height:16px;color:#000;letter-spacing:-0.213px;">Navigateur</span>
<svg class="r" style="left:185px;top:325px;" width="8" height="8"><path d="M1 1 L6.5 6.5 M6.5 1 L1 6.5" stroke="#000" stroke-width="1.6" fill="none"/></svg>
<div class="r" style="left:14px;top:336px;width:181px;height:174px;background:#ffffff;border-left:1px solid #a0a0a0;border-top:1px solid #a0a0a0;box-sizing:border-box;"></div>
<div class="r" style="left:28px;top:354px;width:1px;height:98px;background:transparent;background-image:linear-gradient(#808080 50%,transparent 50%);background-size:1px 2px;"></div>
<div class="r" style="left:33px;top:366px;width:7px;height:1px;background:transparent;background-image:linear-gradient(90deg,#808080 50%,transparent 50%);background-size:2px 1px;"></div>
<div class="r" style="left:33px;top:420px;width:7px;height:1px;background:transparent;background-image:linear-gradient(90deg,#808080 50%,transparent 50%);background-size:2px 1px;"></div>
<div class="r" style="left:33px;top:438px;width:7px;height:1px;background:transparent;background-image:linear-gradient(90deg,#808080 50%,transparent 50%);background-size:2px 1px;"></div>
<div class="r" style="left:33px;top:456px;width:7px;height:1px;background:transparent;background-image:linear-gradient(90deg,#808080 50%,transparent 50%);background-size:2px 1px;"></div>
<div class="r" style="left:49px;top:372px;width:1px;height:8px;background:transparent;background-image:linear-gradient(#808080 50%,transparent 50%);background-size:1px 2px;"></div>
<div class="r" style="left:54px;top:384px;width:7px;height:1px;background:transparent;background-image:linear-gradient(90deg,#808080 50%,transparent 50%);background-size:2px 1px;"></div>
<div class="r" style="left:70px;top:391px;width:1px;height:12px;background:transparent;background-image:linear-gradient(#808080 50%,transparent 50%);background-size:1px 2px;"></div>
<div class="r" style="left:70px;top:402px;width:12px;height:1px;background:transparent;background-image:linear-gradient(90deg,#808080 50%,transparent 50%);background-size:2px 1px;"></div>
<div class="r" style="left:24px;top:362px;width:9px;height:9px;background:linear-gradient(#fff,#e4e4e4);border:1px solid #919191;box-sizing:border-box;border-radius:1px;"></div><div class="r" style="left:26px;top:366px;width:5px;height:1px;background:#2a4aa0;"></div>
<div class="r" style="left:45px;top:380px;width:9px;height:9px;background:linear-gradient(#fff,#e4e4e4);border:1px solid #919191;box-sizing:border-box;border-radius:1px;"></div><div class="r" style="left:47px;top:384px;width:5px;height:1px;background:#2a4aa0;"></div>
<div class="r" style="left:24px;top:416px;width:9px;height:9px;background:linear-gradient(#fff,#e4e4e4);border:1px solid #919191;box-sizing:border-box;border-radius:1px;"></div><div class="r" style="left:26px;top:420px;width:5px;height:1px;background:#2a4aa0;"></div><div class="r" style="left:28px;top:418px;width:1px;height:5px;background:#2a4aa0;"></div>
<div class="r" style="left:24px;top:434px;width:9px;height:9px;background:linear-gradient(#fff,#e4e4e4);border:1px solid #919191;box-sizing:border-box;border-radius:1px;"></div><div class="r" style="left:26px;top:438px;width:5px;height:1px;background:#2a4aa0;"></div><div class="r" style="left:28px;top:436px;width:1px;height:5px;background:#2a4aa0;"></div>
<div class="r" style="left:24px;top:452px;width:9px;height:9px;background:linear-gradient(#fff,#e4e4e4);border:1px solid #919191;box-sizing:border-box;border-radius:1px;"></div><div class="r" style="left:26px;top:456px;width:5px;height:1px;background:#2a4aa0;"></div><div class="r" style="left:28px;top:454px;width:1px;height:5px;background:#2a4aa0;"></div>
<svg class="r" style="left:21px;top:339px;" width="15" height="14"><rect x="0.5" y="0.5" width="9" height="7" rx="1" fill="#eaf2fc" stroke="#4a86c8"/><rect x="4.5" y="4.5" width="10" height="9" rx="1" fill="#fff" stroke="#4a86c8" stroke-width="1.1"/><path d="M2 3 H4 M3 2 V4 M6 2.5 H8" stroke="#4a86c8" stroke-width="0.8"/><path d="M6 10 L7.5 8 L9 11 L10.5 8.5 L12 11 L13 9" stroke="#4a86c8" stroke-width="0.8" fill="none"/></svg>
<svg class="r" style="left:40px;top:356px;" width="18" height="17"><circle cx="5" cy="5" r="3.3" fill="#e9b64a" stroke="#9a7012" stroke-width="0.7"/><path d="M0.6 15.5 Q0.6 8.5 5 8.5 Q9.4 8.5 9.4 15.5 Z" fill="#35b035" stroke="#1d7a1d" stroke-width="0.7"/><circle cx="11.5" cy="5" r="3.8" fill="#edc050" stroke="#9a7012" stroke-width="0.7"/><path d="M5.5 16 Q5.5 9 11.5 9 Q17.5 9 17.5 16 Z" fill="#e3ae2e" stroke="#9a7012" stroke-width="0.7"/><path d="M10 9.5 L14 15.5 L15.5 10 Z" fill="#fff3c4"/></svg>
<svg class="r" style="left:63px;top:375px;" width="14" height="17"><path d="M3 1 L12.5 2.5 V14.5 L3 16 Z" fill="#2b8ae0" stroke="#1a5fa8" stroke-width="0.8"/><path d="M0.8 2.5 L3 1 V16 L0.8 14 Z" fill="#8cc4f4" stroke="#1a5fa8" stroke-width="0.6"/><rect x="5.5" y="4" width="5.5" height="1.6" fill="#dff0ff"/><rect x="5.5" y="7" width="5.5" height="1.6" fill="#dff0ff"/><rect x="8" y="11" width="2" height="2" fill="#ffd84a"/></svg>
<svg class="r" style="left:85px;top:393px;" width="13" height="15"><circle cx="6.5" cy="4.2" r="3.6" fill="#edc050" stroke="#9a7012" stroke-width="0.7"/><path d="M0.6 14.3 Q0.6 7.8 6.5 7.8 Q12.4 7.8 12.4 14.3 Z" fill="#e3ae2e" stroke="#9a7012" stroke-width="0.7"/><path d="M5 8.3 L9 13.8 L10.5 8.8 Z" fill="#fff3c4"/></svg>
<svg class="r" style="left:41px;top:411px;" width="14" height="15"><rect x="0.5" y="0.5" width="13" height="13.5" rx="2.5" fill="#f4cf52" stroke="#b98e1c" stroke-width="0.9"/><rect x="1.5" y="1.5" width="11" height="5" rx="2" fill="#fbe79a" opacity="0.8"/><text x="4.2" y="11.2" font-size="10" font-style="italic" font-weight="bold" fill="#7a5a08" font-family="Liberation Serif, serif">f</text></svg>
<svg class="r" style="left:41px;top:429px;" width="17" height="15"><ellipse cx="7.5" cy="5.2" rx="7.2" ry="2.6" fill="#5b9bd8" stroke="#356fa8" stroke-width="0.7"/><path d="M3.5 4.5 Q7.5 -1.8 11.5 4.5 Z" fill="#7db4e6" stroke="#356fa8" stroke-width="0.7"/><path d="M3.5 7.5 H11.5 L9.5 11 H5.5 Z" fill="#f2c94c" stroke="#b88a1a" stroke-width="0.6"/><path d="M12.5 8.3 L16.3 11.5 L13 14.6 L9.4 11.3 Z" fill="#f2c94c" stroke="#a87a12" stroke-width="0.8"/></svg>
<svg class="r" style="left:41px;top:447px;" width="16" height="15"><path d="M2 1 H11 V3 H10 V10.5 H3 V3 H2 Z" fill="#f6d66a" stroke="#b88a1a" stroke-width="0.8"/><path d="M1 1.2 H12" stroke="#b88a1a" stroke-width="1.4"/><path d="M5 5 H8 M5 7 H8" stroke="#a87a12" stroke-width="0.8"/><path d="M11 8 L15 11.3 L11.5 14.4 L7.8 11.2 Z" fill="#f2c94c" stroke="#a87a12" stroke-width="0.8"/></svg>
<span class="t" style="left:42.50px;top:338.70px;font-size:12.4px;line-height:16px;color:#000;letter-spacing:-0.490px;">MetaTrader FIX</span>
<span class="t" style="left:63.30px;top:356.70px;font-size:12.4px;line-height:16px;color:#000;letter-spacing:-0.274px;">Comptes</span>
<span class="t" style="left:83.80px;top:374.70px;font-size:12.4px;line-height:16px;color:#000;letter-spacing:-0.311px;">XTrade-MT4 Demo</span>
<div class="r" style="left:100px;top:392px;width:94px;height:18px;overflow:hidden"><span class="t" style="left:5.80px;top:0.70px;font-size:12.4px;line-height:16px;color:#000;letter-spacing:-0.581px;">1122925010: lucir</span></div>
<span class="t" style="left:63.30px;top:410.70px;font-size:12.4px;line-height:16px;color:#000;letter-spacing:-0.269px;">Indicateurs</span>
<div class="r" style="left:61px;top:428px;width:97px;height:18px;background:#3399ff;"></div>
<span class="t" style="left:63.50px;top:428.70px;font-size:12.4px;line-height:16px;color:#fff;letter-spacing:-0.363px;">Expert Consultant</span>
<span class="t" style="left:63.30px;top:446.70px;font-size:12.4px;line-height:16px;color:#000;letter-spacing:-0.528px;">Scripts</span>
<div class="r" style="left:77px;top:509px;width:118px;height:1px;background:#000;"></div>
<div class="r" style="left:17px;top:509px;width:60px;height:20px;background:#ffffff;border:1px solid #000;border-top:none;box-sizing:border-box;box-shadow:1px 1px 0 #888;"></div>
<span class="t" style="left:27.30px;top:510.70px;font-size:12.4px;line-height:16px;color:#000;letter-spacing:-0.659px;">Général</span>
<span class="t" style="left:87.40px;top:510.70px;font-size:12.4px;line-height:16px;color:#6a6a6a;letter-spacing:-0.579px;">Favoris</span>
<div class="r" style="left:134px;top:513px;width:1px;height:13px;background:#555;"></div>
<div class="r" style="left:14px;top:510px;width:1px;height:20px;background:#a0a0a0;"></div>
<div class="r" style="left:14px;top:530px;width:182px;height:1px;background:#fcfcfc;"></div>
<!-- p4_mdi -->
<div class="r" style="left:199px;top:106px;width:1167px;height:409px;background:#808080;"></div>
<div class="r" style="left:196px;top:106px;width:3px;height:409px;background:#f0f0f0;"></div>
<div class="r" style="left:198px;top:106px;width:1px;height:409px;background:#a0a0a0;"></div>
<div class="r" style="left:199px;top:106px;width:1px;height:409px;background:#696969;"></div>
<div class="r" style="left:200px;top:106px;width:1166px;height:408px;overflow:hidden">
<div class="r" style="left:-200px;top:-106px;width:1366px;height:768px">
<div class="r" style="left:200px;top:107px;width:392px;height:420px;background:linear-gradient(#94afd3 0px,#a9c1e0 14px,#c3d5ec 31px,#b9d0ea 60px,#b5cce8 100%);border:1px solid #1c1c1c;border-radius:7px 7px 0 0;box-sizing:border-box;box-shadow:inset 1px 1px 0 rgba(255,255,255,.85),inset -1px 0 0 rgba(255,255,255,.6);"></div>
<div class="r" style="left:590px;top:114px;width:1px;height:400px;background:#35c4ee;"></div>
<svg class="r" style="left:211px;top:119px;" width="15" height="14"><rect x="0.5" y="0.5" width="9" height="7" rx="1" fill="#eaf2fc" stroke="#4a86c8"/><rect x="4.5" y="4.5" width="10" height="9" rx="1" fill="#fff" stroke="#4a86c8" stroke-width="1.1"/><path d="M2 3 H4 M3 2 V4 M6 2.5 H8" stroke="#4a86c8" stroke-width="0.8"/><path d="M6 10 L7.5 8 L9 11 L10.5 8.5 L12 11 L13 9" stroke="#4a86c8" stroke-width="0.8" fill="none"/></svg>
<span class="t" style="left:230.30px;top:118.70px;font-size:12.4px;line-height:16px;color:#000;letter-spacing:-0.764px;">DE.30+,M1</span>
<div class="r" style="left:482px;top:117px;width:32px;height:18px;background:linear-gradient(#c9d9ed 0%,#bccfe7 45%,#9fb8d8 50%,#a9c0de 100%);border:1px solid #56657e;border-radius:3px;box-sizing:border-box;box-shadow:inset 0 0 0 1px rgba(255,255,255,.55);"></div><div class="r" style="left:492px;top:125px;width:11px;height:5px;background:#f1f1f1;border:1px solid #4c5566;border-radius:1.5px;box-sizing:border-box;"></div><div class="r" style="left:516px;top:117px;width:32px;height:18px;background:linear-gradient(#c9d9ed 0%,#bccfe7 45%,#9fb8d8 50%,#a9c0de 100%);border:1px solid #56657e;border-radius:3px;box-sizing:border-box;box-shadow:inset 0 0 0 1px rgba(255,255,255,.55);"></div><div class="r" style="left:526px;top:121px;width:11px;height:9px;background:#4c5566;border-radius:2px;"></div><div class="r" style="left:527px;top:122px;width:9px;height:7px;background:#f1f1f1;border-radius:1px;"></div><div class="r" style="left:529px;top:124px;width:5px;height:3px;background:#4c5566;"></div><div class="r" style="left:530px;top:125px;width:3px;height:1px;background:#7f9fd0;"></div><div class="r" style="left:550px;top:117px;width:32px;height:18px;background:linear-gradient(#e9aa9b 0%,#de8470 45%,#c4401f 50%,#d87058 100%);border:1px solid #5c1c1c;border-radius:3px;box-sizing:border-box;box-shadow:inset 0 0 0 1px rgba(255,255,255,.55);"></div><svg class="r" style="left:559px;top:120px;" width="14" height="12"><path d="M3.8 2.8 L10.2 9.2 M10.2 2.8 L3.8 9.2" stroke="#4a3030" stroke-width="4.4" stroke-linecap="square"/><path d="M3.8 2.8 L10.2 9.2 M10.2 2.8 L3.8 9.2" stroke="#f1f1f1" stroke-width="2.6" stroke-linecap="square"/></svg>
<div class="r" style="left:208px;top:138px;width:376px;height:380px;background:#000;border:1px solid;border-color:#909090 #eef3f9 #6b6b6b #6b6b6b;border-top-width:2px;border-bottom:none;box-sizing:border-box;"></div>
<div class="r" style="left:212px;top:142px;width:328px;height:1px;background:#fff;"></div>
<div class="r" style="left:212px;top:142px;width:1px;height:372px;background:#fff;"></div>
<div class="r" style="left:539px;top:142px;width:1px;height:372px;background:#fff;"></div>
<svg class="r" style="left:216px;top:149px;" width="8" height="5"><path d="M0 0 H7.5 L3.75 4.2 Z" fill="#fff"/></svg>
<span class="t" style="left:227.60px;top:142.73px;font-size:10px;line-height:16px;color:#fff;letter-spacing:-0.234px;transform:scaleY(0.875);transform-origin:0 11.46px;">DE.30+,M1  11402.0 11404.0 11400.0 11402.5</span>
<div class="r" style="left:540px;top:148px;width:2px;height:1px;background:#fff;"></div>
<span class="t" style="left:545.30px;top:140.73px;font-size:10px;line-height:16px;color:#fff;letter-spacing:-0.358px;transform:scaleY(0.875);transform-origin:0 11.46px;">11423.5</span>
<div class="r" style="left:540px;top:182px;width:2px;height:1px;background:#fff;"></div>
<span class="t" style="left:545.30px;top:174.73px;font-size:10px;line-height:16px;color:#fff;letter-spacing:-0.358px;transform:scaleY(0.875);transform-origin:0 11.46px;">11420.0</span>
<div class="r" style="left:540px;top:215px;width:2px;height:1px;background:#fff;"></div>
<span class="t" style="left:545.30px;top:207.73px;font-size:10px;line-height:16px;color:#fff;letter-spacing:-0.358px;transform:scaleY(0.875);transform-origin:0 11.46px;">11416.5</span>
<div class="r" style="left:540px;top:249px;width:2px;height:1px;background:#fff;"></div>
<span class="t" style="left:545.30px;top:241.73px;font-size:10px;line-height:16px;color:#fff;letter-spacing:-0.358px;transform:scaleY(0.875);transform-origin:0 11.46px;">11413.0</span>
<div class="r" style="left:540px;top:282px;width:2px;height:1px;background:#fff;"></div>
<span class="t" style="left:545.30px;top:274.74px;font-size:10px;line-height:16px;color:#fff;letter-spacing:-0.358px;transform:scaleY(0.875);transform-origin:0 11.46px;">11409.5</span>
<div class="r" style="left:540px;top:316px;width:2px;height:1px;background:#fff;"></div>
<span class="t" style="left:545.30px;top:308.74px;font-size:10px;line-height:16px;color:#fff;letter-spacing:-0.358px;transform:scaleY(0.875);transform-origin:0 11.46px;">11406.0</span>
<div class="r" style="left:540px;top:383px;width:2px;height:1px;background:#fff;"></div>
<span class="t" style="left:545.30px;top:375.74px;font-size:10px;line-height:16px;color:#fff;letter-spacing:-0.358px;transform:scaleY(0.875);transform-origin:0 11.46px;">11399.0</span>
<div class="r" style="left:540px;top:417px;width:2px;height:1px;background:#fff;"></div>
<span class="t" style="left:545.30px;top:409.74px;font-size:10px;line-height:16px;color:#fff;letter-spacing:-0.358px;transform:scaleY(0.875);transform-origin:0 11.46px;">11395.5</span>
<div class="r" style="left:540px;top:451px;width:2px;height:1px;background:#fff;"></div>
<span class="t" style="left:545.30px;top:443.74px;font-size:10px;line-height:16px;color:#fff;letter-spacing:-0.358px;transform:scaleY(0.875);transform-origin:0 11.46px;">11392.0</span>
<div class="r" style="left:540px;top:484px;width:2px;height:1px;background:#fff;"></div>
<span class="t" style="left:545.30px;top:476.74px;font-size:10px;line-height:16px;color:#fff;letter-spacing:-0.358px;transform:scaleY(0.875);transform-origin:0 11.46px;">11388.5</span>
<div class="r" style="left:540px;top:350px;width:2px;height:1px;background:#fff;"></div>
<div class="r" style="left:541px;top:345px;width:42px;height:11px;background:#fff;"></div>
<span class="t" style="left:545.30px;top:342.74px;font-size:10px;line-height:16px;color:#000;letter-spacing:-0.358px;transform:scaleY(0.875);transform-origin:0 11.46px;">11402.5</span>
<div class="r" style="left:592px;top:107px;width:388px;height:420px;background:linear-gradient(#cfdcec 0px,#d8e3f0 14px,#e0e9f4 31px,#d9e4f1 60px,#d4e0ee 100%);border:1px solid #4a4a4a;border-radius:7px 7px 0 0;box-sizing:border-box;box-shadow:inset 1px 1px 0 rgba(255,255,255,.85),inset -1px 0 0 rgba(255,255,255,.6);"></div>
<svg class="r" style="left:603px;top:119px;" width="15" height="14"><rect x="0.5" y="0.5" width="9" height="7" rx="1" fill="#eaf2fc" stroke="#4a86c8"/><rect x="4.5" y="4.5" width="10" height="9" rx="1" fill="#fff" stroke="#4a86c8" stroke-width="1.1"/><path d="M2 3 H4 M3 2 V4 M6 2.5 H8" stroke="#4a86c8" stroke-width="0.8"/><path d="M6 10 L7.5 8 L9 11 L10.5 8.5 L12 11 L13 9" stroke="#4a86c8" stroke-width="0.8" fill="none"/></svg>
<span class="t" style="left:622.00px;top:118.70px;font-size:12.4px;line-height:16px;color:#9c9c9c;letter-spacing:-0.653px;">DE.30+,M5</span>
<div class="r" style="left:870px;top:117px;width:32px;height:18px;background:linear-gradient(#e6edf6 0%,#dde7f2 45%,#cfdbea 50%,#d6e1ee 100%);border:1px solid #8593a8;border-radius:3px;box-sizing:border-box;box-shadow:inset 0 0 0 1px rgba(255,255,255,.6);"></div><div class="r" style="left:880px;top:125px;width:11px;height:5px;background:#f8f8f8;border:1px solid #7a8392;border-radius:1.5px;box-sizing:border-box;"></div><div class="r" style="left:904px;top:117px;width:32px;height:18px;background:linear-gradient(#e6edf6 0%,#dde7f2 45%,#cfdbea 50%,#d6e1ee 100%);border:1px solid #8593a8;border-radius:3px;box-sizing:border-box;box-shadow:inset 0 0 0 1px rgba(255,255,255,.6);"></div><div class="r" style="left:914px;top:121px;width:11px;height:9px;background:#7a8392;border-radius:2px;"></div><div class="r" style="left:915px;top:122px;width:9px;height:7px;background:#f8f8f8;border-radius:1px;"></div><div class="r" style="left:917px;top:124px;width:5px;height:3px;background:#7a8392;"></div><div class="r" style="left:918px;top:125px;width:3px;height:1px;background:#c4d2e4;"></div><div class="r" style="left:938px;top:117px;width:32px;height:18px;background:linear-gradient(#e6edf6 0%,#dde7f2 45%,#cfdbea 50%,#d6e1ee 100%);border:1px solid #8593a8;border-radius:3px;box-sizing:border-box;box-shadow:inset 0 0 0 1px rgba(255,255,255,.6);"></div><svg class="r" style="left:947px;top:120px;" width="14" height="12"><path d="M3.8 2.8 L10.2 9.2 M10.2 2.8 L3.8 9.2" stroke="#7a8392" stroke-width="4.4" stroke-linecap="square"/><path d="M3.8 2.8 L10.2 9.2 M10.2 2.8 L3.8 9.2" stroke="#f8f8f8" stroke-width="2.6" stroke-linecap="square"/></svg>
<div class="r" style="left:600px;top:138px;width:372px;height:380px;background:#000;border:1px solid;border-color:#909090 #eef3f9 #6b6b6b #6b6b6b;border-top-width:2px;border-bottom:none;box-sizing:border-box;"></div>
<div class="r" style="left:604px;top:142px;width:324px;height:1px;background:#fff;"></div>
<div class="r" style="left:604px;top:142px;width:1px;height:372px;background:#fff;"></div>
<div class="r" style="left:927px;top:142px;width:1px;height:372px;background:#fff;"></div>
<svg class="r" style="left:608px;top:149px;" width="8" height="5"><path d="M0 0 H7.5 L3.75 4.2 Z" fill="#fff"/></svg>
<span class="t" style="left:619.20px;top:142.73px;font-size:10px;line-height:16px;color:#fff;letter-spacing:-0.234px;transform:scaleY(0.875);transform-origin:0 11.46px;">DE.30+,M5  11401.8 11405.8 11399.8 11402.5</span>
<div class="r" style="left:928px;top:173px;width:2px;height:1px;background:#fff;"></div>
<span class="t" style="left:933.50px;top:165.73px;font-size:10px;line-height:16px;color:#fff;letter-spacing:-0.387px;transform:scaleY(0.875);transform-origin:0 11.46px;">11421.0</span>
<div class="r" style="left:928px;top:207px;width:2px;height:1px;background:#fff;"></div>
<span class="t" style="left:933.50px;top:199.73px;font-size:10px;line-height:16px;color:#fff;letter-spacing:-0.387px;transform:scaleY(0.875);transform-origin:0 11.46px;">11416.5</span>
<div class="r" style="left:928px;top:242px;width:2px;height:1px;background:#fff;"></div>
<span class="t" style="left:933.50px;top:234.73px;font-size:10px;line-height:16px;color:#fff;letter-spacing:-0.387px;transform:scaleY(0.875);transform-origin:0 11.46px;">11412.0</span>
<div class="r" style="left:928px;top:277px;width:2px;height:1px;background:#fff;"></div>
<span class="t" style="left:933.50px;top:269.74px;font-size:10px;line-height:16px;color:#fff;letter-spacing:-0.387px;transform:scaleY(0.875);transform-origin:0 11.46px;">11407.5</span>
<div class="r" style="left:928px;top:311px;width:2px;height:1px;background:#fff;"></div>
<span class="t" style="left:933.50px;top:303.74px;font-size:10px;line-height:16px;color:#fff;letter-spacing:-0.387px;transform:scaleY(0.875);transform-origin:0 11.46px;">11403.0</span>
<div class="r" style="left:928px;top:346px;width:2px;height:1px;background:#fff;"></div>
<span class="t" style="left:933.50px;top:338.74px;font-size:10px;line-height:16px;color:#fff;letter-spacing:-0.387px;transform:scaleY(0.875);transform-origin:0 11.46px;">11398.5</span>
<div class="r" style="left:928px;top:380px;width:2px;height:1px;background:#fff;"></div>
<span class="t" style="left:933.50px;top:372.74px;font-size:10px;line-height:16px;color:#fff;letter-spacing:-0.387px;transform:scaleY(0.875);transform-origin:0 11.46px;">11394.0</span>
<div class="r" style="left:928px;top:415px;width:2px;height:1px;background:#fff;"></div>
<span class="t" style="left:933.50px;top:407.74px;font-size:10px;line-height:16px;color:#fff;letter-spacing:-0.387px;transform:scaleY(0.875);transform-origin:0 11.46px;">11389.5</span>
<div class="r" style="left:928px;top:450px;width:2px;height:1px;background:#fff;"></div>
<span class="t" style="left:933.50px;top:442.74px;font-size:10px;line-height:16px;color:#fff;letter-spacing:-0.387px;transform:scaleY(0.875);transform-origin:0 11.46px;">11385.0</span>
<div class="r" style="left:928px;top:484px;width:2px;height:1px;background:#fff;"></div>
<span class="t" style="left:933.50px;top:476.74px;font-size:10px;line-height:16px;color:#fff;letter-spacing:-0.387px;transform:scaleY(0.875);transform-origin:0 11.46px;">11380.5</span>
<div class="r" style="left:928px;top:315px;width:2px;height:1px;background:#fff;"></div>
<div class="r" style="left:929px;top:310px;width:42px;height:11px;background:#fff;"></div>
<span class="t" style="left:933.50px;top:307.74px;font-size:10px;line-height:16px;color:#000;letter-spacing:-0.387px;transform:scaleY(0.875);transform-origin:0 11.46px;">11402.5</span>
<div class="r" style="left:980px;top:107px;width:393px;height:420px;background:linear-gradient(#cfdcec 0px,#d8e3f0 14px,#e0e9f4 31px,#d9e4f1 60px,#d4e0ee 100%);border:1px solid #4a4a4a;border-radius:7px 7px 0 0;box-sizing:border-box;box-shadow:inset 1px 1px 0 rgba(255,255,255,.85),inset -1px 0 0 rgba(255,255,255,.6);"></div>
<svg class="r" style="left:992px;top:119px;" width="15" height="14"><rect x="0.5" y="0.5" width="9" height="7" rx="1" fill="#eaf2fc" stroke="#4a86c8"/><rect x="4.5" y="4.5" width="10" height="9" rx="1" fill="#fff" stroke="#4a86c8" stroke-width="1.1"/><path d="M2 3 H4 M3 2 V4 M6 2.5 H8" stroke="#4a86c8" stroke-width="0.8"/><path d="M6 10 L7.5 8 L9 11 L10.5 8.5 L12 11 L13 9" stroke="#4a86c8" stroke-width="0.8" fill="none"/></svg>
<span class="t" style="left:1011.00px;top:118.70px;font-size:12.4px;line-height:16px;color:#9c9c9c;letter-spacing:-0.627px;">DE.30+,M15</span>
<div class="r" style="left:1265px;top:117px;width:32px;height:18px;background:linear-gradient(#e6edf6 0%,#dde7f2 45%,#cfdbea 50%,#d6e1ee 100%);border:1px solid #8593a8;border-radius:3px;box-sizing:border-box;box-shadow:inset 0 0 0 1px rgba(255,255,255,.6);"></div><div class="r" style="left:1275px;top:125px;width:11px;height:5px;background:#f8f8f8;border:1px solid #7a8392;border-radius:1.5px;box-sizing:border-box;"></div><div class="r" style="left:1299px;top:117px;width:32px;height:18px;background:linear-gradient(#e6edf6 0%,#dde7f2 45%,#cfdbea 50%,#d6e1ee 100%);border:1px solid #8593a8;border-radius:3px;box-sizing:border-box;box-shadow:inset 0 0 0 1px rgba(255,255,255,.6);"></div><div class="r" style="left:1309px;top:121px;width:11px;height:9px;background:#7a8392;border-radius:2px;"></div><div class="r" style="left:1310px;top:122px;width:9px;height:7px;background:#f8f8f8;border-radius:1px;"></div><div class="r" style="left:1312px;top:124px;width:5px;height:3px;background:#7a8392;"></div><div class="r" style="left:1313px;top:125px;width:3px;height:1px;background:#c4d2e4;"></div><div class="r" style="left:1333px;top:117px;width:32px;height:18px;background:linear-gradient(#e6edf6 0%,#dde7f2 45%,#cfdbea 50%,#d6e1ee 100%);border:1px solid #8593a8;border-radius:3px;box-sizing:border-box;box-shadow:inset 0 0 0 1px rgba(255,255,255,.6);"></div><svg class="r" style="left:1342px;top:120px;" width="14" height="12"><path d="M3.8 2.8 L10.2 9.2 M10.2 2.8 L3.8 9.2" stroke="#7a8392" stroke-width="4.4" stroke-linecap="square"/><path d="M3.8 2.8 L10.2 9.2 M10.2 2.8 L3.8 9.2" stroke="#f8f8f8" stroke-width="2.6" stroke-linecap="square"/></svg>
<div class="r" style="left:990px;top:138px;width:381px;height:380px;background:#000;border:1px solid;border-color:#909090 #eef3f9 #6b6b6b #6b6b6b;border-top-width:2px;border-bottom:none;box-sizing:border-box;"></div>
<div class="r" style="left:993px;top:142px;width:330px;height:1px;background:#fff;"></div>
<div class="r" style="left:993px;top:142px;width:1px;height:372px;background:#fff;"></div>
<div class="r" style="left:1322px;top:142px;width:1px;height:372px;background:#fff;"></div>
<svg class="r" style="left:997px;top:149px;" width="8" height="5"><path d="M0 0 H7.5 L3.75 4.2 Z" fill="#fff"/></svg>
<span class="t" style="left:1008.20px;top:142.73px;font-size:10px;line-height:16px;color:#fff;letter-spacing:-0.241px;transform:scaleY(0.875);transform-origin:0 11.46px;">DE.30+,M15  11401.8 11405.8 11399.8 11402.5</span>
<div class="r" style="left:1323px;top:177px;width:2px;height:1px;background:#fff;"></div>
<span class="t" style="left:1328.20px;top:169.73px;font-size:10px;line-height:16px;color:#fff;letter-spacing:-0.344px;transform:scaleY(0.875);transform-origin:0 11.46px;">11447.5</span>
<div class="r" style="left:1323px;top:211px;width:2px;height:1px;background:#fff;"></div>
<span class="t" style="left:1328.20px;top:203.73px;font-size:10px;line-height:16px;color:#fff;letter-spacing:-0.344px;transform:scaleY(0.875);transform-origin:0 11.46px;">11439.0</span>
<div class="r" style="left:1323px;top:246px;width:2px;height:1px;background:#fff;"></div>
<span class="t" style="left:1328.20px;top:238.73px;font-size:10px;line-height:16px;color:#fff;letter-spacing:-0.344px;transform:scaleY(0.875);transform-origin:0 11.46px;">11430.5</span>
<div class="r" style="left:1323px;top:280px;width:2px;height:1px;background:#fff;"></div>
<span class="t" style="left:1328.20px;top:272.74px;font-size:10px;line-height:16px;color:#fff;letter-spacing:-0.344px;transform:scaleY(0.875);transform-origin:0 11.46px;">11422.0</span>
<div class="r" style="left:1323px;top:315px;width:2px;height:1px;background:#fff;"></div>
<span class="t" style="left:1328.20px;top:307.74px;font-size:10px;line-height:16px;color:#fff;letter-spacing:-0.344px;transform:scaleY(0.875);transform-origin:0 11.46px;">11413.5</span>
<div class="r" style="left:1323px;top:349px;width:2px;height:1px;background:#fff;"></div>
<span class="t" style="left:1328.20px;top:341.74px;font-size:10px;line-height:16px;color:#fff;letter-spacing:-0.344px;transform:scaleY(0.875);transform-origin:0 11.46px;">11405.0</span>
<div class="r" style="left:1323px;top:384px;width:2px;height:1px;background:#fff;"></div>
<span class="t" style="left:1328.20px;top:376.74px;font-size:10px;line-height:16px;color:#fff;letter-spacing:-0.344px;transform:scaleY(0.875);transform-origin:0 11.46px;">11396.5</span>
<div class="r" style="left:1323px;top:418px;width:2px;height:1px;background:#fff;"></div>
<span class="t" style="left:1328.20px;top:410.74px;font-size:10px;line-height:16px;color:#fff;letter-spacing:-0.344px;transform:scaleY(0.875);transform-origin:0 11.46px;">11388.0</span>
<div class="r" style="left:1323px;top:452px;width:2px;height:1px;background:#fff;"></div>
<span class="t" style="left:1328.20px;top:444.74px;font-size:10px;line-height:16px;color:#fff;letter-spacing:-0.344px;transform:scaleY(0.875);transform-origin:0 11.46px;">11379.5</span>
<div class="r" style="left:1323px;top:487px;width:2px;height:1px;background:#fff;"></div>
<span class="t" style="left:1328.20px;top:479.74px;font-size:10px;line-height:16px;color:#fff;letter-spacing:-0.344px;transform:scaleY(0.875);transform-origin:0 11.46px;">11371.0</span>
<div class="r" style="left:1323px;top:360px;width:2px;height:1px;background:#fff;"></div>
<div class="r" style="left:1324px;top:355px;width:46px;height:11px;background:#fff;"></div>
<span class="t" style="left:1328.20px;top:352.74px;font-size:10px;line-height:16px;color:#000;letter-spacing:-0.344px;transform:scaleY(0.875);transform-origin:0 11.46px;">11402.5</span>
<svg class="r" style="left:213px;top:143px" width="326" height="370" viewBox="213 143 326 370" shape-rendering="crispEdges"><rect x="212" y="398" width="3" height="74" fill="#ffffff"/><rect x="217" y="412" width="1" height="30" fill="#4169e1"/><rect x="216" y="427" width="3" height="10" fill="#4169e1"/><rect x="221" y="412" width="1" height="28" fill="#4169e1"/><rect x="220" y="426" width="3" height="7" fill="#4169e1"/><rect x="225" y="408" width="1" height="49" fill="#ffffff"/><rect x="224" y="424" width="3" height="28" fill="#ffffff"/><rect x="229" y="441" width="1" height="27" fill="#4169e1"/><rect x="228" y="441" width="3" height="16" fill="#4169e1"/><rect x="233" y="419" width="1" height="42" fill="#ffffff"/><rect x="232" y="436" width="3" height="23" fill="#ffffff"/><rect x="237" y="432" width="1" height="29" fill="#ffffff"/><rect x="236" y="446" width="3" height="11" fill="#ffffff"/><rect x="245" y="395" width="1" height="62" fill="#4169e1"/><rect x="244" y="403" width="3" height="45" fill="#4169e1"/><rect x="249" y="390" width="1" height="43" fill="#ffffff"/><rect x="248" y="403" width="3" height="21" fill="#ffffff"/><rect x="257" y="427" width="1" height="19" fill="#ffffff"/><rect x="256" y="427" width="3" height="15" fill="#ffffff"/><rect x="261" y="423" width="1" height="23" fill="#4169e1"/><rect x="260" y="424" width="3" height="12" fill="#4169e1"/><rect x="265" y="395" width="1" height="54" fill="#ffffff"/><rect x="264" y="422" width="3" height="22" fill="#ffffff"/><rect x="269" y="422" width="1" height="25" fill="#4169e1"/><rect x="268" y="427" width="3" height="14" fill="#4169e1"/><rect x="273" y="408" width="1" height="20" fill="#4169e1"/><rect x="272" y="417" width="3" height="10" fill="#4169e1"/><rect x="277" y="403" width="1" height="38" fill="#ffffff"/><rect x="276" y="427" width="3" height="14" fill="#ffffff"/><rect x="281" y="393" width="1" height="48" fill="#4169e1"/><rect x="280" y="432" width="3" height="9" fill="#4169e1"/><rect x="288" y="408" width="3" height="29" fill="#4169e1"/><rect x="293" y="400" width="1" height="23" fill="#ffffff"/><rect x="292" y="403" width="3" height="12" fill="#ffffff"/><rect x="297" y="366" width="1" height="43" fill="#4169e1"/><rect x="296" y="393" width="3" height="16" fill="#4169e1"/><rect x="301" y="388" width="1" height="18" fill="#4169e1"/><rect x="300" y="393" width="3" height="3" fill="#4169e1"/><rect x="304" y="398" width="3" height="106" fill="#ffffff"/><rect x="309" y="456" width="1" height="48" fill="#4169e1"/><rect x="308" y="461" width="3" height="43" fill="#4169e1"/><rect x="313" y="451" width="1" height="62" fill="#ffffff"/><rect x="312" y="461" width="3" height="52" fill="#ffffff"/><rect x="317" y="448" width="1" height="65" fill="#4169e1"/><rect x="316" y="461" width="3" height="52" fill="#4169e1"/><rect x="321" y="446" width="1" height="58" fill="#ffffff"/><rect x="320" y="451" width="3" height="53" fill="#ffffff"/><rect x="325" y="423" width="1" height="81" fill="#4169e1"/><rect x="324" y="424" width="3" height="80" fill="#4169e1"/><rect x="329" y="388" width="1" height="45" fill="#4169e1"/><rect x="328" y="427" width="3" height="6" fill="#4169e1"/><rect x="333" y="398" width="1" height="39" fill="#ffffff"/><rect x="332" y="422" width="3" height="15" fill="#ffffff"/><rect x="340" y="403" width="3" height="32" fill="#4169e1"/><rect x="345" y="408" width="1" height="25" fill="#ffffff"/><rect x="344" y="412" width="3" height="6" fill="#ffffff"/><rect x="349" y="412" width="1" height="21" fill="#ffffff"/><rect x="348" y="415" width="3" height="18" fill="#ffffff"/><rect x="353" y="427" width="1" height="77" fill="#ffffff"/><rect x="352" y="437" width="3" height="67" fill="#ffffff"/><rect x="357" y="419" width="1" height="94" fill="#ffffff"/><rect x="356" y="438" width="3" height="75" fill="#ffffff"/><rect x="361" y="458" width="1" height="55" fill="#ffffff"/><rect x="360" y="460" width="3" height="53" fill="#ffffff"/><rect x="365" y="458" width="1" height="55" fill="#ffffff"/><rect x="364" y="461" width="3" height="52" fill="#ffffff"/><rect x="369" y="469" width="1" height="44" fill="#4169e1"/><rect x="368" y="472" width="3" height="41" fill="#4169e1"/><rect x="373" y="486" width="1" height="27" fill="#4169e1"/><rect x="372" y="490" width="3" height="23" fill="#4169e1"/><rect x="377" y="499" width="1" height="14" fill="#4169e1"/><rect x="376" y="502" width="3" height="11" fill="#4169e1"/><rect x="381" y="484" width="1" height="24" fill="#4169e1"/><rect x="380" y="484" width="3" height="21" fill="#4169e1"/><rect x="385" y="469" width="1" height="33" fill="#4169e1"/><rect x="384" y="475" width="3" height="5" fill="#4169e1"/><rect x="389" y="423" width="1" height="60" fill="#4169e1"/><rect x="388" y="426" width="3" height="45" fill="#4169e1"/><rect x="392" y="312" width="3" height="116" fill="#4169e1"/><rect x="397" y="278" width="1" height="37" fill="#4169e1"/><rect x="396" y="288" width="3" height="24" fill="#4169e1"/><rect x="401" y="240" width="1" height="44" fill="#4169e1"/><rect x="400" y="254" width="3" height="30" fill="#4169e1"/><rect x="405" y="172" width="1" height="93" fill="#4169e1"/><rect x="404" y="206" width="3" height="51" fill="#4169e1"/><rect x="409" y="163" width="1" height="73" fill="#ffffff"/><rect x="408" y="201" width="3" height="35" fill="#ffffff"/><rect x="413" y="220" width="1" height="32" fill="#ffffff"/><rect x="412" y="240" width="3" height="10" fill="#ffffff"/><rect x="417" y="230" width="1" height="32" fill="#4169e1"/><rect x="416" y="230" width="3" height="15" fill="#4169e1"/><rect x="421" y="220" width="1" height="59" fill="#ffffff"/><rect x="420" y="220" width="3" height="45" fill="#ffffff"/><rect x="425" y="268" width="1" height="30" fill="#ffffff"/><rect x="424" y="268" width="3" height="18" fill="#ffffff"/><rect x="429" y="267" width="1" height="50" fill="#ffffff"/><rect x="428" y="283" width="3" height="27" fill="#ffffff"/><rect x="433" y="292" width="1" height="42" fill="#ffffff"/><rect x="432" y="307" width="3" height="10" fill="#ffffff"/><rect x="437" y="297" width="1" height="25" fill="#4169e1"/><rect x="436" y="302" width="3" height="17" fill="#4169e1"/><rect x="441" y="292" width="1" height="49" fill="#ffffff"/><rect x="440" y="299" width="3" height="42" fill="#ffffff"/><rect x="445" y="321" width="1" height="40" fill="#ffffff"/><rect x="444" y="347" width="3" height="9" fill="#ffffff"/><rect x="449" y="340" width="1" height="30" fill="#4169e1"/><rect x="448" y="355" width="3" height="3" fill="#4169e1"/><rect x="453" y="328" width="1" height="30" fill="#ffffff"/><rect x="452" y="350" width="3" height="8" fill="#ffffff"/><rect x="457" y="318" width="1" height="38" fill="#4169e1"/><rect x="456" y="345" width="3" height="11" fill="#4169e1"/><rect x="461" y="350" width="1" height="27" fill="#ffffff"/><rect x="460" y="350" width="3" height="11" fill="#ffffff"/><rect x="465" y="336" width="1" height="38" fill="#4169e1"/><rect x="464" y="350" width="3" height="6" fill="#4169e1"/><rect x="241" y="451" width="1" height="33" fill="#7fff00"/><rect x="240" y="451" width="3" height="1" fill="#7fff00"/><rect x="253" y="412" width="1" height="92" fill="#7fff00"/><rect x="252" y="427" width="3" height="1" fill="#7fff00"/><rect x="285" y="427" width="1" height="77" fill="#7fff00"/><rect x="284" y="438" width="3" height="1" fill="#7fff00"/><rect x="337" y="400" width="1" height="41" fill="#7fff00"/><rect x="336" y="433" width="3" height="1" fill="#7fff00"/><polyline points="213.3,443.4 220.4,441.1 229.3,441.6 239.9,445.9 247.0,440.2 255.8,437.6 266.4,436.7 275.3,434.5 282.4,434.9 293.0,431.4 301.5,424.3 307.2,430.5 314.3,441.1 321.3,444.6 328.4,442.0 337.3,441.1 344.4,435.8 353.2,435.8 360.3,442.0 370.9,457.9 370.1,457.9 377.2,466.8 385.2,469.1 390.5,460.6 396.7,433.1 403.8,403.0 403.6,406.0 408.1,385.1 412.5,369.2 416.9,356.8 421.4,347.9 425.8,341.7 432.0,336.9 438.2,333.4 440.8,333.8 449.7,337.3 458.5,340.8 464.7,343.0" fill="none" stroke="#00008b" stroke-width="1" shape-rendering="crispEdges"/><polyline points="213.3,448.2 225.7,446.4 239.9,447.6 252.3,444.6 266.4,442.9 278.8,441.4 285.9,441.1 293.0,438.1 301.5,435.8 307.2,437.6 314.3,442.0 321.3,443.4 332.0,442.0 342.6,439.9 355.0,439.7 362.1,443.8 370.9,449.1 371.0,449.9 379.0,454.0 386.0,455.8 390.5,453.5 396.7,444.6 403.8,429.6 410.8,415.4 416.1,405.7 416.4,406.0 423.1,396.6 430.2,389.5 438.2,384.2 446.1,381.9 453.2,380.1 458.5,378.0 464.7,377.1" fill="none" stroke="#ff0000" stroke-width="1" shape-rendering="crispEdges"/></svg>
<svg class="r" style="left:605px;top:143px" width="322" height="370" viewBox="605 143 322 370" shape-rendering="crispEdges"><rect x="605" y="429" width="1" height="57" fill="#4169e1"/><rect x="604" y="433" width="3" height="53" fill="#4169e1"/><rect x="609" y="426" width="1" height="62" fill="#ffffff"/><rect x="608" y="438" width="3" height="48" fill="#ffffff"/><rect x="613" y="449" width="1" height="39" fill="#4169e1"/><rect x="612" y="453" width="3" height="35" fill="#4169e1"/><rect x="617" y="430" width="1" height="33" fill="#ffffff"/><rect x="616" y="451" width="3" height="11" fill="#ffffff"/><rect x="621" y="439" width="1" height="26" fill="#ffffff"/><rect x="620" y="458" width="3" height="5" fill="#ffffff"/><rect x="625" y="461" width="1" height="33" fill="#ffffff"/><rect x="624" y="464" width="3" height="9" fill="#ffffff"/><rect x="629" y="455" width="1" height="24" fill="#ffffff"/><rect x="628" y="470" width="3" height="5" fill="#ffffff"/><rect x="633" y="471" width="1" height="42" fill="#ffffff"/><rect x="632" y="478" width="3" height="27" fill="#ffffff"/><rect x="637" y="504" width="1" height="9" fill="#ffffff"/><rect x="636" y="512" width="3" height="1" fill="#ffffff"/><rect x="641" y="449" width="1" height="64" fill="#4169e1"/><rect x="640" y="461" width="3" height="52" fill="#4169e1"/><rect x="645" y="438" width="1" height="29" fill="#4169e1"/><rect x="644" y="439" width="3" height="24" fill="#4169e1"/><rect x="649" y="441" width="1" height="32" fill="#ffffff"/><rect x="648" y="441" width="3" height="26" fill="#ffffff"/><rect x="653" y="458" width="1" height="34" fill="#ffffff"/><rect x="652" y="468" width="3" height="18" fill="#ffffff"/><rect x="657" y="481" width="1" height="30" fill="#ffffff"/><rect x="656" y="481" width="3" height="7" fill="#ffffff"/><rect x="661" y="476" width="1" height="26" fill="#4169e1"/><rect x="660" y="478" width="3" height="12" fill="#4169e1"/><rect x="665" y="470" width="1" height="35" fill="#ffffff"/><rect x="664" y="476" width="3" height="28" fill="#ffffff"/><rect x="669" y="456" width="1" height="46" fill="#4169e1"/><rect x="668" y="478" width="3" height="24" fill="#4169e1"/><rect x="673" y="432" width="1" height="47" fill="#4169e1"/><rect x="672" y="439" width="3" height="38" fill="#4169e1"/><rect x="677" y="415" width="1" height="41" fill="#4169e1"/><rect x="676" y="438" width="3" height="4" fill="#4169e1"/><rect x="681" y="401" width="1" height="39" fill="#4169e1"/><rect x="680" y="415" width="3" height="21" fill="#4169e1"/><rect x="685" y="395" width="1" height="41" fill="#ffffff"/><rect x="684" y="412" width="3" height="21" fill="#ffffff"/><rect x="689" y="430" width="1" height="29" fill="#ffffff"/><rect x="688" y="430" width="3" height="19" fill="#ffffff"/><rect x="693" y="430" width="1" height="32" fill="#4169e1"/><rect x="692" y="441" width="3" height="11" fill="#4169e1"/><rect x="697" y="438" width="1" height="33" fill="#ffffff"/><rect x="696" y="439" width="3" height="24" fill="#ffffff"/><rect x="701" y="445" width="1" height="40" fill="#ffffff"/><rect x="700" y="458" width="3" height="7" fill="#ffffff"/><rect x="705" y="430" width="1" height="47" fill="#4169e1"/><rect x="704" y="434" width="3" height="33" fill="#4169e1"/><rect x="709" y="407" width="1" height="38" fill="#4169e1"/><rect x="708" y="411" width="3" height="26" fill="#4169e1"/><rect x="713" y="376" width="1" height="40" fill="#4169e1"/><rect x="712" y="399" width="3" height="15" fill="#4169e1"/><rect x="717" y="395" width="1" height="72" fill="#ffffff"/><rect x="716" y="397" width="3" height="70" fill="#ffffff"/><rect x="721" y="415" width="1" height="58" fill="#4169e1"/><rect x="720" y="441" width="3" height="28" fill="#4169e1"/><rect x="725" y="422" width="1" height="91" fill="#ffffff"/><rect x="724" y="441" width="3" height="55" fill="#ffffff"/><rect x="729" y="390" width="1" height="123" fill="#4169e1"/><rect x="728" y="407" width="3" height="91" fill="#4169e1"/><rect x="733" y="221" width="1" height="72" fill="#ffffff"/><rect x="732" y="221" width="3" height="26" fill="#ffffff"/><rect x="737" y="238" width="1" height="60" fill="#ffffff"/><rect x="736" y="248" width="3" height="30" fill="#ffffff"/><rect x="741" y="273" width="1" height="52" fill="#ffffff"/><rect x="740" y="278" width="3" height="42" fill="#ffffff"/><rect x="745" y="288" width="1" height="36" fill="#4169e1"/><rect x="744" y="300" width="3" height="20" fill="#4169e1"/><rect x="749" y="278" width="1" height="40" fill="#ffffff"/><rect x="748" y="300" width="3" height="18" fill="#ffffff"/><rect x="753" y="315" width="1" height="69" fill="#ffffff"/><rect x="752" y="319" width="3" height="65" fill="#ffffff"/><rect x="757" y="382" width="1" height="54" fill="#ffffff"/><rect x="756" y="384" width="3" height="39" fill="#ffffff"/><rect x="761" y="386" width="1" height="53" fill="#4169e1"/><rect x="760" y="399" width="3" height="28" fill="#4169e1"/><rect x="765" y="374" width="1" height="26" fill="#4169e1"/><rect x="764" y="388" width="3" height="8" fill="#4169e1"/><rect x="769" y="347" width="1" height="55" fill="#4169e1"/><rect x="768" y="353" width="3" height="45" fill="#4169e1"/><rect x="777" y="346" width="1" height="66" fill="#ffffff"/><rect x="776" y="355" width="3" height="57" fill="#ffffff"/><rect x="781" y="372" width="1" height="139" fill="#ffffff"/><rect x="780" y="402" width="3" height="44" fill="#ffffff"/><rect x="785" y="374" width="1" height="107" fill="#ffffff"/><rect x="784" y="453" width="3" height="19" fill="#ffffff"/><rect x="789" y="318" width="1" height="170" fill="#4169e1"/><rect x="788" y="369" width="3" height="103" fill="#4169e1"/><rect x="793" y="364" width="1" height="98" fill="#ffffff"/><rect x="792" y="372" width="3" height="35" fill="#ffffff"/><rect x="797" y="361" width="1" height="58" fill="#4169e1"/><rect x="796" y="386" width="3" height="24" fill="#4169e1"/><rect x="801" y="332" width="1" height="74" fill="#4169e1"/><rect x="800" y="342" width="3" height="42" fill="#4169e1"/><rect x="805" y="330" width="1" height="83" fill="#ffffff"/><rect x="804" y="342" width="3" height="53" fill="#ffffff"/><rect x="809" y="351" width="1" height="72" fill="#4169e1"/><rect x="808" y="357" width="3" height="43" fill="#4169e1"/><rect x="813" y="347" width="1" height="57" fill="#ffffff"/><rect x="812" y="357" width="3" height="27" fill="#ffffff"/><rect x="817" y="349" width="1" height="55" fill="#4169e1"/><rect x="816" y="385" width="3" height="4" fill="#4169e1"/><rect x="821" y="328" width="1" height="99" fill="#ffffff"/><rect x="820" y="384" width="3" height="35" fill="#ffffff"/><rect x="825" y="372" width="1" height="95" fill="#4169e1"/><rect x="824" y="374" width="3" height="43" fill="#4169e1"/><rect x="829" y="346" width="1" height="37" fill="#4169e1"/><rect x="828" y="369" width="3" height="13" fill="#4169e1"/><rect x="833" y="365" width="1" height="91" fill="#ffffff"/><rect x="832" y="366" width="3" height="76" fill="#ffffff"/><rect x="837" y="411" width="1" height="48" fill="#4169e1"/><rect x="836" y="415" width="3" height="25" fill="#4169e1"/><rect x="841" y="173" width="1" height="248" fill="#4169e1"/><rect x="840" y="199" width="3" height="213" fill="#4169e1"/><rect x="845" y="165" width="1" height="109" fill="#ffffff"/><rect x="844" y="196" width="3" height="67" fill="#ffffff"/><rect x="849" y="249" width="1" height="75" fill="#ffffff"/><rect x="848" y="261" width="3" height="59" fill="#ffffff"/><rect x="853" y="290" width="1" height="47" fill="#4169e1"/><rect x="852" y="315" width="3" height="6" fill="#4169e1"/><rect x="773" y="343" width="1" height="17" fill="#7fff00"/><rect x="772" y="350" width="3" height="1" fill="#7fff00"/><polyline points="605.3,367.8 608.9,377.5 612.4,386.0 609.7,380.0 617.7,394.2 626.6,410.1 637.2,430.5 644.3,434.5 653.1,442.0 662.0,450.8 669.4,457.0 677.9,451.7 685.0,448.2 693.9,447.8 701.8,450.5 708.0,446.9 715.1,441.6 722.2,444.1 725.7,448.2 730.2,442.0 734.6,419.0 740.0,403.0 745.3,390.6 750.6,385.3 757.7,389.7 764.8,390.6 773.6,383.9 779.8,388.9 784.3,397.7 796.7,397.7 802.0,392.0 810.8,388.5 823.2,389.7 829.4,387.4 833.0,392.0 837.4,393.8 841.8,383.5 843.6,374.0 846.3,365.1 849.8,359.8 853.0,356.8" fill="none" stroke="#00008b" stroke-width="1" shape-rendering="crispEdges"/><polyline points="605.3,335.0 615.9,348.3 626.6,360.7 637.2,374.8 644.3,379.3 645.2,380.0 653.1,388.0 662.0,396.8 669.4,402.7 676.1,405.3 683.2,405.7 692.1,409.2 701.8,414.2 713.3,414.5 720.4,417.2 726.1,420.7 730.2,418.6 738.1,405.7 740.0,405.7 748.9,396.5 764.8,397.2 773.6,393.3 779.8,395.1 785.2,399.1 796.7,397.7 807.3,395.1 817.9,393.3 837.4,395.1 841.8,388.9 849.8,380.9 848.0,381.4 853.0,377.9" fill="none" stroke="#ff0000" stroke-width="1" shape-rendering="crispEdges"/></svg>
<svg class="r" style="left:994px;top:143px" width="328" height="370" viewBox="994 143 328 370" shape-rendering="crispEdges"><rect x="993" y="492" width="3" height="21" fill="#4169e1"/><rect x="998" y="413" width="1" height="100" fill="#4169e1"/><rect x="997" y="447" width="3" height="52" fill="#4169e1"/><rect x="1002" y="438" width="1" height="75" fill="#ffffff"/><rect x="1001" y="448" width="3" height="43" fill="#ffffff"/><rect x="1006" y="457" width="1" height="56" fill="#4169e1"/><rect x="1005" y="472" width="3" height="21" fill="#4169e1"/><rect x="1010" y="418" width="1" height="59" fill="#4169e1"/><rect x="1009" y="436" width="3" height="36" fill="#4169e1"/><rect x="1014" y="413" width="1" height="96" fill="#ffffff"/><rect x="1013" y="437" width="3" height="54" fill="#ffffff"/><rect x="1018" y="473" width="1" height="32" fill="#ffffff"/><rect x="1017" y="490" width="3" height="9" fill="#ffffff"/><rect x="1022" y="490" width="1" height="23" fill="#ffffff"/><rect x="1021" y="498" width="3" height="15" fill="#ffffff"/><rect x="1026" y="494" width="1" height="19" fill="#4169e1"/><rect x="1025" y="504" width="3" height="9" fill="#4169e1"/><rect x="1030" y="490" width="1" height="23" fill="#4169e1"/><rect x="1029" y="504" width="3" height="9" fill="#4169e1"/><rect x="1034" y="479" width="1" height="34" fill="#4169e1"/><rect x="1033" y="497" width="3" height="9" fill="#4169e1"/><rect x="1038" y="406" width="1" height="107" fill="#4169e1"/><rect x="1037" y="410" width="3" height="89" fill="#4169e1"/><rect x="1042" y="233" width="1" height="193" fill="#4169e1"/><rect x="1041" y="308" width="3" height="104" fill="#4169e1"/><rect x="1046" y="297" width="1" height="64" fill="#ffffff"/><rect x="1045" y="309" width="3" height="13" fill="#ffffff"/><rect x="1050" y="254" width="1" height="70" fill="#4169e1"/><rect x="1049" y="303" width="3" height="18" fill="#4169e1"/><rect x="1054" y="273" width="1" height="53" fill="#ffffff"/><rect x="1053" y="300" width="3" height="19" fill="#ffffff"/><rect x="1058" y="162" width="1" height="167" fill="#4169e1"/><rect x="1057" y="236" width="3" height="84" fill="#4169e1"/><rect x="1062" y="234" width="1" height="155" fill="#ffffff"/><rect x="1061" y="234" width="3" height="140" fill="#ffffff"/><rect x="1066" y="336" width="1" height="90" fill="#ffffff"/><rect x="1065" y="374" width="3" height="45" fill="#ffffff"/><rect x="1069" y="349" width="3" height="69" fill="#4169e1"/><rect x="1074" y="339" width="1" height="37" fill="#ffffff"/><rect x="1073" y="347" width="3" height="19" fill="#ffffff"/><rect x="1078" y="351" width="1" height="44" fill="#ffffff"/><rect x="1077" y="366" width="3" height="29" fill="#ffffff"/><rect x="1082" y="325" width="1" height="69" fill="#4169e1"/><rect x="1081" y="380" width="3" height="14" fill="#4169e1"/><rect x="1086" y="366" width="1" height="51" fill="#ffffff"/><rect x="1085" y="382" width="3" height="12" fill="#ffffff"/><rect x="1090" y="345" width="1" height="48" fill="#4169e1"/><rect x="1089" y="354" width="3" height="39" fill="#4169e1"/><rect x="1094" y="345" width="1" height="38" fill="#ffffff"/><rect x="1093" y="352" width="3" height="9" fill="#ffffff"/><rect x="1098" y="340" width="1" height="45" fill="#4169e1"/><rect x="1097" y="349" width="3" height="12" fill="#4169e1"/><rect x="1102" y="333" width="1" height="74" fill="#ffffff"/><rect x="1101" y="346" width="3" height="3" fill="#ffffff"/><rect x="1106" y="291" width="1" height="83" fill="#4169e1"/><rect x="1105" y="291" width="3" height="59" fill="#4169e1"/><rect x="1110" y="283" width="1" height="52" fill="#ffffff"/><rect x="1109" y="293" width="3" height="28" fill="#ffffff"/><rect x="1114" y="313" width="1" height="44" fill="#ffffff"/><rect x="1113" y="319" width="3" height="16" fill="#ffffff"/><rect x="1118" y="276" width="1" height="77" fill="#4169e1"/><rect x="1117" y="293" width="3" height="44" fill="#4169e1"/><rect x="1122" y="243" width="1" height="60" fill="#4169e1"/><rect x="1121" y="246" width="3" height="50" fill="#4169e1"/><rect x="1126" y="242" width="1" height="117" fill="#ffffff"/><rect x="1125" y="245" width="3" height="84" fill="#ffffff"/><rect x="1130" y="303" width="1" height="149" fill="#ffffff"/><rect x="1129" y="330" width="3" height="112" fill="#ffffff"/><rect x="1134" y="327" width="1" height="155" fill="#4169e1"/><rect x="1133" y="337" width="3" height="101" fill="#4169e1"/><rect x="1138" y="321" width="1" height="45" fill="#4169e1"/><rect x="1137" y="337" width="3" height="2" fill="#4169e1"/><rect x="1142" y="324" width="1" height="58" fill="#ffffff"/><rect x="1141" y="336" width="3" height="41" fill="#ffffff"/><rect x="1146" y="356" width="1" height="43" fill="#ffffff"/><rect x="1145" y="375" width="3" height="7" fill="#ffffff"/><rect x="1150" y="347" width="1" height="42" fill="#4169e1"/><rect x="1149" y="371" width="3" height="10" fill="#4169e1"/><rect x="1154" y="361" width="1" height="47" fill="#4169e1"/><rect x="1153" y="364" width="3" height="7" fill="#4169e1"/><rect x="1158" y="362" width="1" height="80" fill="#ffffff"/><rect x="1157" y="365" width="3" height="69" fill="#ffffff"/><rect x="1162" y="418" width="1" height="45" fill="#ffffff"/><rect x="1161" y="434" width="3" height="17" fill="#ffffff"/><rect x="1166" y="421" width="1" height="31" fill="#4169e1"/><rect x="1165" y="438" width="3" height="14" fill="#4169e1"/><rect x="1170" y="434" width="1" height="31" fill="#ffffff"/><rect x="1169" y="439" width="3" height="22" fill="#ffffff"/><rect x="1174" y="425" width="1" height="55" fill="#4169e1"/><rect x="1173" y="425" width="3" height="40" fill="#4169e1"/><rect x="1178" y="427" width="1" height="37" fill="#ffffff"/><rect x="1177" y="427" width="3" height="25" fill="#ffffff"/><rect x="1182" y="436" width="1" height="25" fill="#4169e1"/><rect x="1181" y="446" width="3" height="7" fill="#4169e1"/><rect x="1186" y="405" width="1" height="41" fill="#4169e1"/><rect x="1185" y="412" width="3" height="34" fill="#4169e1"/><rect x="1190" y="402" width="1" height="36" fill="#ffffff"/><rect x="1189" y="411" width="3" height="17" fill="#ffffff"/><rect x="1194" y="423" width="1" height="27" fill="#4169e1"/><rect x="1193" y="423" width="3" height="3" fill="#4169e1"/><rect x="1198" y="392" width="1" height="49" fill="#ffffff"/><rect x="1197" y="424" width="3" height="17" fill="#ffffff"/><rect x="1202" y="399" width="1" height="67" fill="#4169e1"/><rect x="1201" y="409" width="3" height="33" fill="#4169e1"/><rect x="1206" y="310" width="1" height="56" fill="#ffffff"/><rect x="1205" y="310" width="3" height="52" fill="#ffffff"/><rect x="1210" y="340" width="1" height="56" fill="#ffffff"/><rect x="1209" y="362" width="3" height="34" fill="#ffffff"/><rect x="1214" y="391" width="1" height="35" fill="#ffffff"/><rect x="1213" y="396" width="3" height="7" fill="#ffffff"/><rect x="1218" y="375" width="1" height="36" fill="#ffffff"/><rect x="1217" y="399" width="3" height="12" fill="#ffffff"/><rect x="1222" y="361" width="1" height="103" fill="#4169e1"/><rect x="1221" y="388" width="3" height="19" fill="#4169e1"/><rect x="1226" y="369" width="1" height="69" fill="#4169e1"/><rect x="1225" y="374" width="3" height="16" fill="#4169e1"/><rect x="1230" y="368" width="1" height="49" fill="#ffffff"/><rect x="1229" y="374" width="3" height="23" fill="#ffffff"/><rect x="1234" y="367" width="1" height="74" fill="#4169e1"/><rect x="1233" y="391" width="3" height="8" fill="#4169e1"/><rect x="1238" y="376" width="1" height="61" fill="#ffffff"/><rect x="1237" y="394" width="3" height="19" fill="#ffffff"/><rect x="1242" y="280" width="1" height="136" fill="#4169e1"/><rect x="1241" y="362" width="3" height="49" fill="#4169e1"/><rect x="1246" y="346" width="1" height="26" fill="#4169e1"/><rect x="1245" y="360" width="3" height="3" fill="#4169e1"/><polyline points="1001.5,512.8 1011.3,500.8 1018.3,500.4 1025.4,503.1 1032.5,502.7 1038.7,493.3 1043.1,475.6 1048.4,454.4 1053.8,434.9 1058.2,416.3 1062.6,412.2 1067.0,411.5 1071.5,404.8 1076.8,401.6 1086.5,398.6 1094.5,390.6 1103.3,381.8 1106.9,375.7 1115.7,366.0 1122.8,349.2 1126.4,346.5 1130.8,355.4 1137.9,352.4 1145.8,356.8 1154.7,359.8 1162.5,374.0 1169.6,386.0 1173.1,388.9 1182.0,401.3 1190.8,404.8 1198.8,410.5 1202.3,410.5 1206.8,404.8 1213.9,403.9 1220.9,402.7 1229.8,400.4 1238.6,400.4 1245.7,394.2" fill="none" stroke="#00008b" stroke-width="1" shape-rendering="crispEdges"/><polyline points="1059.1,512.8 1066.1,505.7 1073.2,495.1 1085.6,482.7 1096.3,470.3 1106.9,456.1 1115.7,445.5 1122.8,433.1 1127.2,428.2 1131.7,428.7 1137.0,423.4 1145.8,418.1 1154.7,414.2 1160.7,415.4 1171.4,419.0 1182.0,421.3 1192.6,421.3 1201.5,422.5 1208.5,418.6 1219.2,416.8 1229.8,414.2 1240.4,411.9 1245.7,408.9" fill="none" stroke="#ff0000" stroke-width="1" shape-rendering="crispEdges"/></svg>
<div class="r" style="left:247px;top:459px;width:130px;height:50px;background:#ffffff;border:1px solid #767676;box-sizing:border-box;box-shadow:1px 1px 0 #bbb;"></div>
<span class="t" style="left:253.50px;top:460.98px;font-size:11.6px;line-height:16px;color:#575757;letter-spacing:0.114px;">Moving Average (20)</span>
<span class="t" style="left:253.50px;top:475.48px;font-size:11.6px;line-height:16px;color:#575757;letter-spacing:-0.232px;">Time: 2016.12.19 09:39</span>
<span class="t" style="left:253.50px;top:490.48px;font-size:11.6px;line-height:16px;color:#575757;letter-spacing:-0.309px;">Value: 11393.1</span>
</div></div>
<div class="r" style="left:199px;top:514px;width:1167px;height:22px;background:#f0f0f0;"></div>
<div class="r" style="left:199px;top:513px;width:1167px;height:1px;background:#ffffff;"></div>
<div class="r" style="left:199px;top:514px;width:1167px;height:1px;background:#000;"></div>
<div class="r" style="left:205px;top:514px;width:79px;height:20px;background:#ffffff;border:1px solid #000;border-top:none;box-sizing:border-box;box-shadow:1px 1px 0 #888;"></div>
<span class="t" style="left:215.50px;top:516.20px;font-size:12.4px;line-height:16px;color:#000;letter-spacing:-0.764px;">DE.30+,M1</span>
<span class="t" style="left:295.50px;top:516.20px;font-size:12.4px;line-height:16px;color:#6a6a6a;letter-spacing:-0.653px;">DE.30+,M5</span>
<div class="r" style="left:364px;top:518px;width:1px;height:13px;background:#555;"></div>
<span class="t" style="left:374.40px;top:516.20px;font-size:12.4px;line-height:16px;color:#6a6a6a;letter-spacing:-0.667px;">DE.30+,M15</span>
<div class="r" style="left:448px;top:518px;width:1px;height:13px;background:#555;"></div>
<svg class="r" style="left:1332px;top:520px;" width="6" height="9"><path d="M5 0.5 L1 4.5 L5 8.5 Z" fill="#9a9a9a"/></svg>
<svg class="r" style="left:1351px;top:520px;" width="6" height="9"><path d="M1 0.5 L5 4.5 L1 8.5 Z" fill="#9a9a9a"/></svg>
<!-- p5_terminal -->
<div class="r" style="left:12px;top:536px;width:1353px;height:1px;background:#d8d8d8;"></div>
<div class="r" style="left:12px;top:537px;width:1353px;height:1px;background:#fafafa;"></div>
<svg class="r" style="left:14px;top:540px;" width="8" height="8"><path d="M1 1 L6.5 6.5 M6.5 1 L1 6.5" stroke="#000" stroke-width="1.6" fill="none"/></svg>
<div class="r" style="left:13px;top:553px;width:12px;height:147px;background:linear-gradient(#d3e0f0,#c3d5ea 50%,#b8cde6);"></div>
<span class="t" style="left:13px;top:699px;width:44px;height:12px;font-size:11.4px;line-height:12px;letter-spacing:-0.05px;color:#000;transform-origin:0 0;transform:rotate(-90deg);">Terminal</span>
<div class="r" style="left:26px;top:539px;width:1337px;height:140px;background:#ffffff;border:1px solid #a0a0a0;border-bottom:none;box-sizing:border-box;"></div>
<div class="r" style="left:186px;top:540px;width:1px;height:24px;background:#dcdcdc;"></div>
<span class="t" style="left:33.00px;top:543.70px;font-size:12.4px;line-height:16px;color:#000;letter-spacing:-0.355px;">Heure</span>
<span class="t" style="left:193.00px;top:543.70px;font-size:12.4px;line-height:16px;color:#000;letter-spacing:-0.617px;">Message</span>
<div class="r" style="left:27px;top:564px;width:1335px;height:20px;background:#ebebeb;border-top:1px solid #d9d9d9;box-sizing:border-box;"></div>
<div class="r" style="left:186px;top:564px;width:1px;height:20px;background:#d0d0d0;"></div>
<svg class="r" style="left:32px;top:570px;" width="8" height="8"><circle cx="4" cy="4" r="3" fill="#a8a8a8" stroke="#6e6e6e" stroke-width="1"/></svg>
<span class="t" style="left:49.00px;top:565.70px;font-size:12.4px;line-height:16px;color:#000;letter-spacing:-0.792px;">2016.12.19 10:15:47.135</span>
<span class="t" style="left:191.00px;top:565.70px;font-size:12.4px;line-height:16px;color:#000;letter-spacing:-0.450px;">Expert les plus DE.30+,M1: removed</span>
<div class="r" style="left:27px;top:584px;width:1335px;height:20px;background:#ffffff;border-top:1px solid #d9d9d9;box-sizing:border-box;"></div>
<div class="r" style="left:186px;top:584px;width:1px;height:20px;background:#d0d0d0;"></div>
<svg class="r" style="left:32px;top:590px;" width="8" height="8"><circle cx="4" cy="4" r="3" fill="#a8a8a8" stroke="#6e6e6e" stroke-width="1"/></svg>
<span class="t" style="left:49.00px;top:585.70px;font-size:12.4px;line-height:16px;color:#000;letter-spacing:-0.792px;">2016.12.19 10:15:47.102</span>
<span class="t" style="left:191.00px;top:585.70px;font-size:12.4px;line-height:16px;color:#000;letter-spacing:-0.432px;">les plus DE.30+,M1: la valeur la plus haute est11398.1et la valeur la bas haute est11256.5</span>
<div class="r" style="left:27px;top:604px;width:1335px;height:20px;background:#ebebeb;border-top:1px solid #d9d9d9;box-sizing:border-box;"></div>
<div class="r" style="left:186px;top:604px;width:1px;height:20px;background:#d0d0d0;"></div>
<svg class="r" style="left:32px;top:610px;" width="8" height="8"><circle cx="4" cy="4" r="3" fill="#a8a8a8" stroke="#6e6e6e" stroke-width="1"/></svg>
<span class="t" style="left:49.00px;top:605.70px;font-size:12.4px;line-height:16px;color:#000;letter-spacing:-0.792px;">2016.12.19 10:15:47.102</span>
<span class="t" style="left:191.00px;top:605.70px;font-size:12.4px;line-height:16px;color:#000;letter-spacing:-0.389px;">les plus DE.30+,M1: uninit reason 1</span>
<div class="r" style="left:27px;top:624px;width:1335px;height:20px;background:#ffffff;border-top:1px solid #d9d9d9;box-sizing:border-box;"></div>
<div class="r" style="left:186px;top:624px;width:1px;height:20px;background:#d0d0d0;"></div>
<svg class="r" style="left:32px;top:630px;" width="8" height="8"><circle cx="4" cy="4" r="3" fill="#a8a8a8" stroke="#6e6e6e" stroke-width="1"/></svg>
<span class="t" style="left:49.00px;top:625.70px;font-size:12.4px;line-height:16px;color:#000;letter-spacing:-0.752px;">2016.12.19 10:15:11.106</span>
<span class="t" style="left:191.00px;top:625.70px;font-size:12.4px;line-height:16px;color:#000;letter-spacing:-0.363px;">les plus DE.30+,M1: initialized</span>
<div class="r" style="left:27px;top:644px;width:1335px;height:20px;background:#ebebeb;border-top:1px solid #d9d9d9;box-sizing:border-box;"></div>
<div class="r" style="left:186px;top:644px;width:1px;height:20px;background:#d0d0d0;"></div>
<svg class="r" style="left:32px;top:650px;" width="8" height="8"><circle cx="4" cy="4" r="3" fill="#a8a8a8" stroke="#6e6e6e" stroke-width="1"/></svg>
<span class="t" style="left:49.00px;top:645.70px;font-size:12.4px;line-height:16px;color:#000;letter-spacing:-0.792px;">2016.12.19 10:15:09.106</span>
<span class="t" style="left:191.00px;top:645.70px;font-size:12.4px;line-height:16px;color:#000;letter-spacing:-0.425px;">Expert les plus DE.30+,M1: loaded successfully</span>
<div class="r" style="left:27px;top:664px;width:1335px;height:1px;background:#d9d9d9;"></div>
<div class="r" style="left:26px;top:679px;width:653px;height:1px;background:#000;"></div>
<div class="r" style="left:736px;top:679px;width:627px;height:1px;background:#000;"></div>
<div class="r" style="left:679px;top:679px;width:57px;height:19px;background:#ffffff;border:1px solid #000;border-top:none;box-sizing:border-box;box-shadow:1px 1px 0 #888;"></div>
<span class="t" style="left:39.00px;top:680.20px;font-size:12.4px;line-height:16px;color:#6a6a6a;letter-spacing:-0.369px;">Trading</span>
<span class="t" style="left:110.00px;top:680.20px;font-size:12.4px;line-height:16px;color:#6a6a6a;letter-spacing:-0.421px;">Exposition</span>
<span class="t" style="left:184.00px;top:680.20px;font-size:12.4px;line-height:16px;color:#6a6a6a;letter-spacing:-0.059px;">Historique du compte</span>
<span class="t" style="left:320.00px;top:680.20px;font-size:12.4px;line-height:16px;color:#6a6a6a;letter-spacing:-0.272px;">Nouvelles</span>
<span class="t" style="left:395.00px;top:680.20px;font-size:12.4px;line-height:16px;color:#6a6a6a;letter-spacing:-0.371px;">Alertes</span>
<span class="t" style="left:451.00px;top:680.20px;font-size:12.4px;line-height:16px;color:#6a6a6a;letter-spacing:-0.510px;">Messagerie</span>
<span class="t" style="left:530.00px;top:680.20px;font-size:12.4px;line-height:16px;color:#6a6a6a;letter-spacing:-0.225px;">Marché</span>
<span class="t" style="left:602.00px;top:680.20px;font-size:12.4px;line-height:16px;color:#6a6a6a;letter-spacing:-0.105px;">Bibliotheque</span>
<div class="r" style="left:39px;top:694px;width:6px;height:1px;background:#6a6a6a;"></div>
<div class="r" style="left:100px;top:682px;width:1px;height:13px;background:#555;"></div>
<div class="r" style="left:174px;top:682px;width:1px;height:13px;background:#555;"></div>
<div class="r" style="left:310px;top:682px;width:1px;height:13px;background:#555;"></div>
<div class="r" style="left:385px;top:682px;width:1px;height:13px;background:#555;"></div>
<div class="r" style="left:441px;top:682px;width:1px;height:13px;background:#555;"></div>
<div class="r" style="left:520px;top:682px;width:1px;height:13px;background:#555;"></div>
<div class="r" style="left:592px;top:682px;width:1px;height:13px;background:#555;"></div>
<span class="t" style="left:571.50px;top:685.05px;font-size:8.5px;line-height:16px;color:#e02020;letter-spacing:0.023px;font-weight:bold;">61</span>
<span class="t" style="left:689.00px;top:680.20px;font-size:12.4px;line-height:16px;color:#000;letter-spacing:-0.720px;">Experts</span>
<span class="t" style="left:745.50px;top:680.20px;font-size:12.4px;line-height:16px;color:#6a6a6a;letter-spacing:-0.382px;">Journal</span>
<div class="r" style="left:794px;top:682px;width:1px;height:13px;background:#555;"></div>
<div class="r" style="left:12px;top:703px;width:1353px;height:1px;background:#d0d0d0;"></div>
<div class="r" style="left:12px;top:704px;width:1353px;height:1px;background:#ffffff;"></div>
<span class="t" style="left:13.00px;top:708.70px;font-size:12.4px;line-height:16px;color:#000;letter-spacing:-0.202px;">Pour plus d'informations, appuyer F1</span>
<div class="r" style="left:651px;top:708px;width:1px;height:17px;background:#c0c0c0;"></div>
<div class="r" style="left:768px;top:708px;width:1px;height:17px;background:#c0c0c0;"></div>
<div class="r" style="left:869px;top:708px;width:1px;height:17px;background:#c0c0c0;"></div>
<div class="r" style="left:941px;top:708px;width:1px;height:17px;background:#c0c0c0;"></div>
<div class="r" style="left:1012px;top:708px;width:1px;height:17px;background:#c0c0c0;"></div>
<div class="r" style="left:1079px;top:708px;width:1px;height:17px;background:#c0c0c0;"></div>
<div class="r" style="left:1149px;top:708px;width:1px;height:17px;background:#c0c0c0;"></div>
<div class="r" style="left:1216px;top:708px;width:1px;height:17px;background:#c0c0c0;"></div>
<span class="t" style="left:657.00px;top:708.70px;font-size:12.4px;line-height:16px;color:#000;letter-spacing:0.173px;">Default</span>
<span class="t" style="left:774.50px;top:708.70px;font-size:12.4px;line-height:16px;color:#000;letter-spacing:-0.815px;">2016.12.19 09:39</span>
<span class="t" style="left:876.00px;top:708.70px;font-size:12.4px;line-height:16px;color:#000;letter-spacing:-0.644px;">O: 11392.3</span>
<span class="t" style="left:947.50px;top:708.70px;font-size:12.4px;line-height:16px;color:#000;letter-spacing:-0.625px;">H: 11397.8</span>
<span class="t" style="left:1018.50px;top:708.70px;font-size:12.4px;line-height:16px;color:#000;letter-spacing:-0.719px;">L: 11391.5</span>
<span class="t" style="left:1086.00px;top:708.70px;font-size:12.4px;line-height:16px;color:#000;letter-spacing:-0.675px;">C: 11397.0</span>
<span class="t" style="left:1156.00px;top:708.70px;font-size:12.4px;line-height:16px;color:#000;letter-spacing:-0.699px;">V: 53</span>
<span class="t" style="left:1250.50px;top:708.70px;font-size:12.4px;line-height:16px;color:#000;letter-spacing:-0.552px;">1241/1 kb</span>
<svg class="r" style="left:1222px;top:710px;" width="24" height="13"><rect x="0" y="0" width="2" height="13" fill="#4a7a1e"/><rect x="3" y="0" width="2" height="13" fill="#4a7a1e"/><rect x="6" y="0" width="2" height="13" fill="#4a7a1e"/><rect x="9" y="0" width="2" height="13" fill="#4a7a1e"/><rect x="12" y="0" width="2" height="13" fill="#1f4f7a"/><rect x="15" y="0" width="2" height="13" fill="#1f4f7a"/><rect x="18" y="0" width="2" height="13" fill="#1f4f7a"/><rect x="21" y="0" width="2" height="13" fill="#1f4f7a"/></svg>
<svg class="r" style="left:1350px;top:713px;" width="14" height="14"><path d="M13 1 L1 13 M13 5 L5 13 M13 9 L9 13" stroke="#b8b8b8" stroke-width="1"/></svg>
<!-- p6_taskbar -->
<div class="r" style="left:0px;top:728px;width:1366px;height:40px;background:#0c0b0b;"></div>
<div class="r" style="left:0px;top:728px;width:48px;height:40px;background:#2c0f1e;"></div>
<svg class="r" style="left:16px;top:740px;" width="17" height="17"><path d="M0 2.3 L6.8 1.3 V7.8 H0 Z M7.8 1.2 L16.5 0 V7.8 H7.8 Z M0 8.8 H6.8 V15.3 L0 14.3 Z M7.8 8.8 H16.5 V16.6 L7.8 15.4 Z" fill="#fff"/></svg>
<div class="r" style="left:48px;top:728px;width:344px;height:40px;background:#3a3a3a;"></div>
<svg class="r" style="left:57px;top:737px;" width="22" height="22"><circle cx="11" cy="11" r="8.7" fill="none" stroke="#fff" stroke-width="2.6"/></svg>
<span class="t" style="left:84.00px;top:738.23px;font-size:15.2px;line-height:20px;color:#c4c4c4;letter-spacing:-0.274px;">Posez-moi une question.</span>
<svg class="r" style="left:365px;top:739px;" width="12" height="19"><rect x="3.5" y="0.8" width="5" height="10" rx="2.5" fill="#9a9a9a" stroke="#d0d0d0" stroke-width="0.8"/><path d="M1 8 Q1 13.5 6 13.5 Q11 13.5 11 8 M6 13.5 V17 M3.5 17.5 H8.5" stroke="#d0d0d0" stroke-width="1" fill="none"/></svg>
<svg class="r" style="left:408px;top:736px;" width="23" height="23"><path d="M5 11.8 H17.6 C17.8 6.5 14.8 3.2 10.8 3.2 C6.2 3.2 3 6.8 3 11.8 C3 16.8 6.4 19.8 11 19.8 C13.4 19.8 15.4 19.2 17 18.2" stroke="#1a7fd4" stroke-width="4.4" fill="none"/><path d="M1.2 10 C2.5 4.5 7 1.5 11.5 1.8" stroke="#1a7fd4" stroke-width="2.2" fill="none"/></svg>
<svg class="r" style="left:457px;top:737px;" width="24" height="21"><path d="M0.5 2 H9 L11 4.5 H23 V20 H0.5 Z" fill="#f6d36b"/><path d="M0.5 6 H23 V20 H0.5 Z" fill="#fbe38f"/><rect x="6" y="12" width="12" height="8" fill="#4aa3e8"/><rect x="9.5" y="16" width="5" height="4" fill="#fbe38f"/></svg>
<svg class="r" style="left:505px;top:735px;" width="23" height="24"><path d="M7 6 Q7 1 11.5 1 Q16 1 16 6" fill="none" stroke="#fff" stroke-width="1.6"/><path d="M1 6.5 H22 L20.5 23 H2.5 Z" fill="#fff"/><path d="M7 10.5 L11 10 V14 H7 Z M12 9.9 L16.5 9.3 V14 H12 Z M7 15 H11 V19 L7 18.5 Z M12 15 H16.5 V19.7 L12 19.1 Z" fill="#111"/></svg>
<svg class="r" style="left:553px;top:736px;" width="26" height="24"><path d="M6 1 L12 1 L15 6 L12 11 L6 11 L3 6 Z" fill="#f2b928" stroke="#c98f10"/><path d="M16 7 L22 7 L25 12 L22 17 L16 17 L13 12 Z" fill="#f5c53a" stroke="#c98f10"/><path d="M5 12 L11 12 L14 17.5 L11 23 L5 23 L2 17.5 Z" fill="#eeb020" stroke="#c98f10"/><path d="M7 4 L11 8 M11 4 L7 8" stroke="#7a5200" stroke-width="1.3"/><path d="M6 20 L12 15 M15 12 H22" stroke="#7a5200" stroke-width="1.5"/></svg>
<svg class="r" style="left:603px;top:736px;" width="25" height="25"><circle cx="12.5" cy="12.5" r="11.5" fill="#e8641a"/><circle cx="12" cy="10.5" r="7" fill="#2b5fc2"/><path d="M1.5 9 Q0 20 9 23.5 Q19 26 23.5 16 Q24.5 10 21 6 Q22 13 16 15 Q10 16 9 11 Q6 11 5.5 7.5 Q3 8 1.5 9 Z" fill="#f59a1f"/><path d="M3 7 Q6 2 12 1.5 Q8 4 9 7 Z" fill="#f7c03c"/></svg>
<div class="r" style="left:652px;top:736px;width:24px;height:24px;background:#1677d2;"></div>
<svg class="r" style="left:655px;top:738px;" width="18" height="20"><path d="M9 0.5 Q13 2.8 17.5 2.8 V9.5 Q17.5 16 9 19.5 Q0.5 16 0.5 9.5 V2.8 Q5 2.8 9 0.5 Z" fill="#fff"/><path d="M9 0.5 V19.5 M0.5 9.8 H17.5" stroke="#1677d2" stroke-width="1.8"/></svg>
<svg class="r" style="left:701px;top:736px;" width="25" height="25"><circle cx="12.5" cy="12.5" r="12" fill="#e8453c"/><path d="M12.5 12.5 L2.2 6.3 A12 12 0 0 0 11 24.4 L17 14 Z" fill="#2ba24c"/><path d="M12.5 12.5 L17.2 15.5 L11 24.4 A12 12 0 0 0 23.5 7.6 L13 7.6 Z" fill="#fbc116"/><circle cx="12.5" cy="12.5" r="5.4" fill="#fff"/><circle cx="12.5" cy="12.5" r="4.2" fill="#3f7ee8"/></svg>
<svg class="r" style="left:749px;top:736px;" width="25" height="25"><circle cx="12.5" cy="12.5" r="12" fill="#2a4f7a" stroke="#8fb4dc" stroke-width="1"/><circle cx="12.5" cy="12.5" r="8.5" fill="#3f8ad8" stroke="#9cc6f0" stroke-width="1.2"/><circle cx="12.5" cy="12.5" r="4.5" fill="#1c3f6a" stroke="#bfe0ff" stroke-width="1"/><path d="M11 10 L15.5 12.5 L11 15 Z" fill="#dff0ff"/></svg>
<svg class="r" style="left:797px;top:735px;" width="30" height="28"><path d="M4 2 Q9 -1 13 2.5 Q20 1.5 22.5 9 Q26 14 22 19 Q17 25 12 22.5 Q5 24.5 2.5 17 Q-1 11 4 2 Z" fill="#14a9ea"/><text x="7" y="19" font-size="18" font-weight="bold" fill="#fff">S</text><circle cx="22.5" cy="21" r="5.8" fill="#f5a623" stroke="#1a1208" stroke-width="1"/><text x="20.6" y="24" font-size="8" font-weight="bold" fill="#111">1</text></svg>
<div class="r" style="left:836px;top:728px;width:48px;height:40px;background:#3a3a3a;"></div>
<svg class="r" style="left:847px;top:736px;" width="25" height="24"><rect x="0.5" y="0.5" width="24" height="23" rx="4" fill="#555" stroke="#2a2a2a"/><rect x="1.5" y="1.5" width="22" height="10" rx="3" fill="#777" opacity="0.6"/><path d="M4 7 L10 7 L12.5 10 L17 6 L21 6 L21 8.5 L16 12 L21 15.5 L21 18 L17 18 L12.5 14 L10 17 L4 17 L4 14.5 L8.5 14.5 L10.5 12 L8.5 9.5 L4 9.5 Z" fill="#fff"/></svg>
<svg class="r" style="left:895px;top:737px;" width="28" height="24"><path d="M12 1 L27 9 L16 21 L1 13 Z" fill="#d9b23a" stroke="#8a6a10" stroke-width="0.9"/><path d="M1 13 L16 21 L16.5 23.3 L1.5 15.2 Z" fill="#fff4c8" stroke="#8a6a10" stroke-width="0.6"/><circle cx="14" cy="11" r="5" fill="#3d8a5a" stroke="#1f5a3a"/><path d="M11 11 L14 8 L17 11 L14 14 Z" fill="#8fd0f0"/></svg>
<div class="r" style="left:693px;top:766px;width:40px;height:2px;background:#f7c9a5;"></div>
<div class="r" style="left:742px;top:766px;width:40px;height:2px;background:#f7c9a5;"></div>
<div class="r" style="left:791px;top:766px;width:40px;height:2px;background:#f7c9a5;"></div>
<div class="r" style="left:836px;top:766px;width:48px;height:2px;background:#f7c9a5;"></div>
<div class="r" style="left:889px;top:766px;width:40px;height:2px;background:#f7c9a5;"></div>
<div class="r" style="left:1195px;top:728px;width:171px;height:40px;background:#2b1a21;"></div>
<svg class="r" style="left:1200px;top:742px;" width="14" height="10"><path d="M1.5 8 L7 2 L12.5 8" stroke="#fff" stroke-width="1.5" fill="none"/></svg>
<svg class="r" style="left:1222px;top:739px;" width="19" height="19"><circle cx="10.5" cy="9" r="8" fill="#f08a1c"/><circle cx="11" cy="8.5" r="4.5" fill="#fbd9a8"/><circle cx="12" cy="9.5" r="3" fill="#f08a1c"/><circle cx="5.5" cy="13" r="4.8" fill="#e02818"/><path d="M3.5 11 L7.5 15 M7.5 11 L3.5 15" stroke="#fff" stroke-width="1.5"/></svg>
<span class="t" style="left:1264.50px;top:730.70px;font-size:12.4px;line-height:16px;color:#fff;letter-spacing:-0.806px;">10:34</span>
<span class="t" style="left:1249.70px;top:748.70px;font-size:12.4px;line-height:16px;color:#fff;letter-spacing:-0.476px;">19/12/2016</span>
<svg class="r" style="left:1324px;top:740px;" width="28" height="24"><path d="M1 1 H17 V13 H6 V17 L2 13 H1 Z" fill="#fff"/><path d="M4 4.5 H14 M4 7 H14 M4 9.5 H14" stroke="#2b1a21" stroke-width="1.1"/><circle cx="17" cy="15" r="6.3" fill="#2b1a21" stroke="#bbb" stroke-width="1"/><text x="14.2" y="19" font-size="10.5" fill="#fff">6</text></svg>
</body></html>
